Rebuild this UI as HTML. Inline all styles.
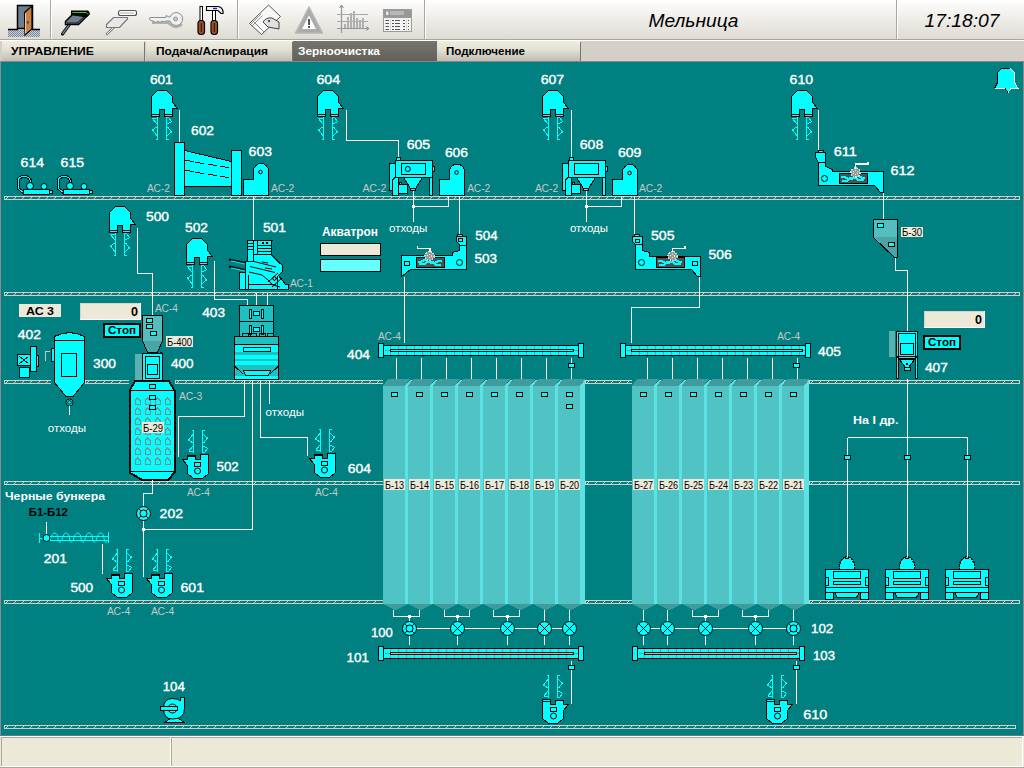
<!DOCTYPE html>
<html><head><meta charset="utf-8"><title>Мельница</title>
<style>
html,body{margin:0;padding:0;width:1024px;height:768px;overflow:hidden;background:#D4D0C8;}
svg{display:block;position:absolute;left:0;top:0;}
text{font-family:"Liberation Sans",sans-serif;}
</style></head><body>
<svg width="1024" height="768" viewBox="0 0 1024 768" shape-rendering="crispEdges">

<defs>
<linearGradient id="tb" x1="0" y1="0" x2="0" y2="1">
 <stop offset="0" stop-color="#FFFFFF"/><stop offset="0.2" stop-color="#F8F7F4"/><stop offset="1" stop-color="#DEDBD3"/>
</linearGradient>
<linearGradient id="tab" x1="0" y1="0" x2="0" y2="1">
 <stop offset="0" stop-color="#F0EEE0"/><stop offset="0.45" stop-color="#E2DFD4"/><stop offset="1" stop-color="#BFBCB4"/>
</linearGradient>
<linearGradient id="tabact" x1="0" y1="0" x2="0" y2="1">
 <stop offset="0" stop-color="#76746E"/><stop offset="1" stop-color="#62605B"/>
</linearGradient>
<pattern id="dith" width="2" height="2" patternUnits="userSpaceOnUse">
 <rect width="2" height="2" fill="#C8CCD4"/><rect width="1" height="1" fill="#7C8AA0"/><rect x="1" y="1" width="1" height="1" fill="#7C8AA0"/>
</pattern>
</defs>
<rect x="0" y="0" width="1024" height="39" fill="url(#tb)"/>
<rect x="0" y="39" width="1024" height="1" fill="#ACA899"/>
<rect x="0" y="40" width="1024" height="1" fill="#FFFFFF"/>
<rect x="50" y="0" width="1" height="39" fill="#ACA899"/><rect x="51" y="0" width="1" height="39" fill="#FFFFFF"/>
<rect x="237" y="0" width="1" height="39" fill="#ACA899"/><rect x="238" y="0" width="1" height="39" fill="#FFFFFF"/>
<rect x="424" y="0" width="1" height="39" fill="#ACA899"/><rect x="425" y="0" width="1" height="39" fill="#FFFFFF"/>
<rect x="896" y="0" width="1" height="39" fill="#ACA899"/><rect x="897" y="0" width="1" height="39" fill="#FFFFFF"/>
<rect x="0" y="41" width="1024" height="21" fill="#D4D0C8"/>
<rect x="2" y="41" width="143" height="20" fill="url(#tab)"/>
<rect x="144" y="42" width="1" height="19" fill="#77756F"/>
<text x="11" y="55" font-size="11" font-weight="bold" fill="#000000" textLength="83" lengthAdjust="spacingAndGlyphs">УПРАВЛЕНИЕ</text>
<rect x="146" y="41" width="147" height="20" fill="url(#tab)"/>
<rect x="292" y="42" width="1" height="19" fill="#77756F"/>
<text x="156" y="55" font-size="11" font-weight="bold" fill="#000000" textLength="112" lengthAdjust="spacingAndGlyphs">Подача/Аспирация</text>
<rect x="293" y="41" width="144" height="20" fill="url(#tabact)"/>
<text x="298" y="55" font-size="11" font-weight="bold" fill="#FFFFFF" textLength="82" lengthAdjust="spacingAndGlyphs">Зерноочистка</text>
<rect x="437" y="41" width="144" height="20" fill="url(#tab)"/>
<rect x="580" y="42" width="1" height="19" fill="#77756F"/>
<text x="446" y="55" font-size="11" font-weight="bold" fill="#000000" textLength="79" lengthAdjust="spacingAndGlyphs">Подключение</text>
<rect x="0" y="61" width="1024" height="1" fill="#8A8780"/>
<text x="648.5" y="27" font-size="19" font-style="italic" fill="#000" textLength="90" lengthAdjust="spacingAndGlyphs">Мельница</text>
<text x="924.5" y="27" font-size="19" font-style="italic" fill="#000" textLength="75" lengthAdjust="spacingAndGlyphs">17:18:07</text>
<rect x="0" y="62" width="1024" height="674" fill="#008080"/>
<rect x="0" y="62" width="1" height="674" fill="#8C8C8C"/>
<rect x="1023" y="62" width="1" height="674" fill="#8C8C8C"/>
<rect x="0" y="736" width="1024" height="32" fill="#ECE9D8"/>
<rect x="0" y="736" width="1024" height="1" fill="#FFFFFF"/>
<rect x="1" y="737" width="169" height="1" fill="#ACA899"/><rect x="1" y="737" width="1" height="29" fill="#ACA899"/>
<rect x="170" y="737" width="1" height="30" fill="#FFFFFF"/><rect x="1" y="766" width="170" height="1" fill="#FFFFFF"/>
<rect x="171" y="737" width="851" height="1" fill="#ACA899"/><rect x="171" y="737" width="1" height="29" fill="#ACA899"/>
<rect x="171" y="766" width="852" height="1" fill="#FFFFFF"/><rect x="1022" y="737" width="1" height="30" fill="#FFFFFF"/>
<rect x="0" y="735" width="1024" height="1" fill="#5E7C7C"/>
<rect x="0" y="767" width="1024" height="1" fill="#ACA899"/>
<rect x="4" y="196" width="1016" height="1" fill="#D4D0C8"/>
<rect x="4" y="199" width="1016" height="1" fill="#D4D0C8"/>
<rect x="4" y="196" width="1" height="4" fill="#D4D0C8"/>
<rect x="1019" y="196" width="1" height="4" fill="#D4D0C8"/>
<path d="M6 198h1v1h-1zM7 197h1v1h-1zM14 198h1v1h-1zM15 197h1v1h-1zM22 198h1v1h-1zM23 197h1v1h-1zM30 198h1v1h-1zM31 197h1v1h-1zM38 198h1v1h-1zM39 197h1v1h-1zM46 198h1v1h-1zM47 197h1v1h-1zM54 198h1v1h-1zM55 197h1v1h-1zM62 198h1v1h-1zM63 197h1v1h-1zM70 198h1v1h-1zM71 197h1v1h-1zM78 198h1v1h-1zM79 197h1v1h-1zM86 198h1v1h-1zM87 197h1v1h-1zM94 198h1v1h-1zM95 197h1v1h-1zM102 198h1v1h-1zM103 197h1v1h-1zM110 198h1v1h-1zM111 197h1v1h-1zM118 198h1v1h-1zM119 197h1v1h-1zM126 198h1v1h-1zM127 197h1v1h-1zM134 198h1v1h-1zM135 197h1v1h-1zM142 198h1v1h-1zM143 197h1v1h-1zM150 198h1v1h-1zM151 197h1v1h-1zM158 198h1v1h-1zM159 197h1v1h-1zM166 198h1v1h-1zM167 197h1v1h-1zM174 198h1v1h-1zM175 197h1v1h-1zM182 198h1v1h-1zM183 197h1v1h-1zM190 198h1v1h-1zM191 197h1v1h-1zM198 198h1v1h-1zM199 197h1v1h-1zM206 198h1v1h-1zM207 197h1v1h-1zM214 198h1v1h-1zM215 197h1v1h-1zM222 198h1v1h-1zM223 197h1v1h-1zM230 198h1v1h-1zM231 197h1v1h-1zM238 198h1v1h-1zM239 197h1v1h-1zM246 198h1v1h-1zM247 197h1v1h-1zM254 198h1v1h-1zM255 197h1v1h-1zM262 198h1v1h-1zM263 197h1v1h-1zM270 198h1v1h-1zM271 197h1v1h-1zM278 198h1v1h-1zM279 197h1v1h-1zM286 198h1v1h-1zM287 197h1v1h-1zM294 198h1v1h-1zM295 197h1v1h-1zM302 198h1v1h-1zM303 197h1v1h-1zM310 198h1v1h-1zM311 197h1v1h-1zM318 198h1v1h-1zM319 197h1v1h-1zM326 198h1v1h-1zM327 197h1v1h-1zM334 198h1v1h-1zM335 197h1v1h-1zM342 198h1v1h-1zM343 197h1v1h-1zM350 198h1v1h-1zM351 197h1v1h-1zM358 198h1v1h-1zM359 197h1v1h-1zM366 198h1v1h-1zM367 197h1v1h-1zM374 198h1v1h-1zM375 197h1v1h-1zM382 198h1v1h-1zM383 197h1v1h-1zM390 198h1v1h-1zM391 197h1v1h-1zM398 198h1v1h-1zM399 197h1v1h-1zM406 198h1v1h-1zM407 197h1v1h-1zM414 198h1v1h-1zM415 197h1v1h-1zM422 198h1v1h-1zM423 197h1v1h-1zM430 198h1v1h-1zM431 197h1v1h-1zM438 198h1v1h-1zM439 197h1v1h-1zM446 198h1v1h-1zM447 197h1v1h-1zM454 198h1v1h-1zM455 197h1v1h-1zM462 198h1v1h-1zM463 197h1v1h-1zM470 198h1v1h-1zM471 197h1v1h-1zM478 198h1v1h-1zM479 197h1v1h-1zM486 198h1v1h-1zM487 197h1v1h-1zM494 198h1v1h-1zM495 197h1v1h-1zM502 198h1v1h-1zM503 197h1v1h-1zM510 198h1v1h-1zM511 197h1v1h-1zM518 198h1v1h-1zM519 197h1v1h-1zM526 198h1v1h-1zM527 197h1v1h-1zM534 198h1v1h-1zM535 197h1v1h-1zM542 198h1v1h-1zM543 197h1v1h-1zM550 198h1v1h-1zM551 197h1v1h-1zM558 198h1v1h-1zM559 197h1v1h-1zM566 198h1v1h-1zM567 197h1v1h-1zM574 198h1v1h-1zM575 197h1v1h-1zM582 198h1v1h-1zM583 197h1v1h-1zM590 198h1v1h-1zM591 197h1v1h-1zM598 198h1v1h-1zM599 197h1v1h-1zM606 198h1v1h-1zM607 197h1v1h-1zM614 198h1v1h-1zM615 197h1v1h-1zM622 198h1v1h-1zM623 197h1v1h-1zM630 198h1v1h-1zM631 197h1v1h-1zM638 198h1v1h-1zM639 197h1v1h-1zM646 198h1v1h-1zM647 197h1v1h-1zM654 198h1v1h-1zM655 197h1v1h-1zM662 198h1v1h-1zM663 197h1v1h-1zM670 198h1v1h-1zM671 197h1v1h-1zM678 198h1v1h-1zM679 197h1v1h-1zM686 198h1v1h-1zM687 197h1v1h-1zM694 198h1v1h-1zM695 197h1v1h-1zM702 198h1v1h-1zM703 197h1v1h-1zM710 198h1v1h-1zM711 197h1v1h-1zM718 198h1v1h-1zM719 197h1v1h-1zM726 198h1v1h-1zM727 197h1v1h-1zM734 198h1v1h-1zM735 197h1v1h-1zM742 198h1v1h-1zM743 197h1v1h-1zM750 198h1v1h-1zM751 197h1v1h-1zM758 198h1v1h-1zM759 197h1v1h-1zM766 198h1v1h-1zM767 197h1v1h-1zM774 198h1v1h-1zM775 197h1v1h-1zM782 198h1v1h-1zM783 197h1v1h-1zM790 198h1v1h-1zM791 197h1v1h-1zM798 198h1v1h-1zM799 197h1v1h-1zM806 198h1v1h-1zM807 197h1v1h-1zM814 198h1v1h-1zM815 197h1v1h-1zM822 198h1v1h-1zM823 197h1v1h-1zM830 198h1v1h-1zM831 197h1v1h-1zM838 198h1v1h-1zM839 197h1v1h-1zM846 198h1v1h-1zM847 197h1v1h-1zM854 198h1v1h-1zM855 197h1v1h-1zM862 198h1v1h-1zM863 197h1v1h-1zM870 198h1v1h-1zM871 197h1v1h-1zM878 198h1v1h-1zM879 197h1v1h-1zM886 198h1v1h-1zM887 197h1v1h-1zM894 198h1v1h-1zM895 197h1v1h-1zM902 198h1v1h-1zM903 197h1v1h-1zM910 198h1v1h-1zM911 197h1v1h-1zM918 198h1v1h-1zM919 197h1v1h-1zM926 198h1v1h-1zM927 197h1v1h-1zM934 198h1v1h-1zM935 197h1v1h-1zM942 198h1v1h-1zM943 197h1v1h-1zM950 198h1v1h-1zM951 197h1v1h-1zM958 198h1v1h-1zM959 197h1v1h-1zM966 198h1v1h-1zM967 197h1v1h-1zM974 198h1v1h-1zM975 197h1v1h-1zM982 198h1v1h-1zM983 197h1v1h-1zM990 198h1v1h-1zM991 197h1v1h-1zM998 198h1v1h-1zM999 197h1v1h-1zM1006 198h1v1h-1zM1007 197h1v1h-1zM1014 198h1v1h-1zM1015 197h1v1h-1z" fill="#D4D0C8"/>
<rect x="4" y="292" width="1016" height="1" fill="#D4D0C8"/>
<rect x="4" y="295" width="1016" height="1" fill="#D4D0C8"/>
<rect x="4" y="292" width="1" height="4" fill="#D4D0C8"/>
<rect x="1019" y="292" width="1" height="4" fill="#D4D0C8"/>
<path d="M6 294h1v1h-1zM7 293h1v1h-1zM14 294h1v1h-1zM15 293h1v1h-1zM22 294h1v1h-1zM23 293h1v1h-1zM30 294h1v1h-1zM31 293h1v1h-1zM38 294h1v1h-1zM39 293h1v1h-1zM46 294h1v1h-1zM47 293h1v1h-1zM54 294h1v1h-1zM55 293h1v1h-1zM62 294h1v1h-1zM63 293h1v1h-1zM70 294h1v1h-1zM71 293h1v1h-1zM78 294h1v1h-1zM79 293h1v1h-1zM86 294h1v1h-1zM87 293h1v1h-1zM94 294h1v1h-1zM95 293h1v1h-1zM102 294h1v1h-1zM103 293h1v1h-1zM110 294h1v1h-1zM111 293h1v1h-1zM118 294h1v1h-1zM119 293h1v1h-1zM126 294h1v1h-1zM127 293h1v1h-1zM134 294h1v1h-1zM135 293h1v1h-1zM142 294h1v1h-1zM143 293h1v1h-1zM150 294h1v1h-1zM151 293h1v1h-1zM158 294h1v1h-1zM159 293h1v1h-1zM166 294h1v1h-1zM167 293h1v1h-1zM174 294h1v1h-1zM175 293h1v1h-1zM182 294h1v1h-1zM183 293h1v1h-1zM190 294h1v1h-1zM191 293h1v1h-1zM198 294h1v1h-1zM199 293h1v1h-1zM206 294h1v1h-1zM207 293h1v1h-1zM214 294h1v1h-1zM215 293h1v1h-1zM222 294h1v1h-1zM223 293h1v1h-1zM230 294h1v1h-1zM231 293h1v1h-1zM238 294h1v1h-1zM239 293h1v1h-1zM246 294h1v1h-1zM247 293h1v1h-1zM254 294h1v1h-1zM255 293h1v1h-1zM262 294h1v1h-1zM263 293h1v1h-1zM270 294h1v1h-1zM271 293h1v1h-1zM278 294h1v1h-1zM279 293h1v1h-1zM286 294h1v1h-1zM287 293h1v1h-1zM294 294h1v1h-1zM295 293h1v1h-1zM302 294h1v1h-1zM303 293h1v1h-1zM310 294h1v1h-1zM311 293h1v1h-1zM318 294h1v1h-1zM319 293h1v1h-1zM326 294h1v1h-1zM327 293h1v1h-1zM334 294h1v1h-1zM335 293h1v1h-1zM342 294h1v1h-1zM343 293h1v1h-1zM350 294h1v1h-1zM351 293h1v1h-1zM358 294h1v1h-1zM359 293h1v1h-1zM366 294h1v1h-1zM367 293h1v1h-1zM374 294h1v1h-1zM375 293h1v1h-1zM382 294h1v1h-1zM383 293h1v1h-1zM390 294h1v1h-1zM391 293h1v1h-1zM398 294h1v1h-1zM399 293h1v1h-1zM406 294h1v1h-1zM407 293h1v1h-1zM414 294h1v1h-1zM415 293h1v1h-1zM422 294h1v1h-1zM423 293h1v1h-1zM430 294h1v1h-1zM431 293h1v1h-1zM438 294h1v1h-1zM439 293h1v1h-1zM446 294h1v1h-1zM447 293h1v1h-1zM454 294h1v1h-1zM455 293h1v1h-1zM462 294h1v1h-1zM463 293h1v1h-1zM470 294h1v1h-1zM471 293h1v1h-1zM478 294h1v1h-1zM479 293h1v1h-1zM486 294h1v1h-1zM487 293h1v1h-1zM494 294h1v1h-1zM495 293h1v1h-1zM502 294h1v1h-1zM503 293h1v1h-1zM510 294h1v1h-1zM511 293h1v1h-1zM518 294h1v1h-1zM519 293h1v1h-1zM526 294h1v1h-1zM527 293h1v1h-1zM534 294h1v1h-1zM535 293h1v1h-1zM542 294h1v1h-1zM543 293h1v1h-1zM550 294h1v1h-1zM551 293h1v1h-1zM558 294h1v1h-1zM559 293h1v1h-1zM566 294h1v1h-1zM567 293h1v1h-1zM574 294h1v1h-1zM575 293h1v1h-1zM582 294h1v1h-1zM583 293h1v1h-1zM590 294h1v1h-1zM591 293h1v1h-1zM598 294h1v1h-1zM599 293h1v1h-1zM606 294h1v1h-1zM607 293h1v1h-1zM614 294h1v1h-1zM615 293h1v1h-1zM622 294h1v1h-1zM623 293h1v1h-1zM630 294h1v1h-1zM631 293h1v1h-1zM638 294h1v1h-1zM639 293h1v1h-1zM646 294h1v1h-1zM647 293h1v1h-1zM654 294h1v1h-1zM655 293h1v1h-1zM662 294h1v1h-1zM663 293h1v1h-1zM670 294h1v1h-1zM671 293h1v1h-1zM678 294h1v1h-1zM679 293h1v1h-1zM686 294h1v1h-1zM687 293h1v1h-1zM694 294h1v1h-1zM695 293h1v1h-1zM702 294h1v1h-1zM703 293h1v1h-1zM710 294h1v1h-1zM711 293h1v1h-1zM718 294h1v1h-1zM719 293h1v1h-1zM726 294h1v1h-1zM727 293h1v1h-1zM734 294h1v1h-1zM735 293h1v1h-1zM742 294h1v1h-1zM743 293h1v1h-1zM750 294h1v1h-1zM751 293h1v1h-1zM758 294h1v1h-1zM759 293h1v1h-1zM766 294h1v1h-1zM767 293h1v1h-1zM774 294h1v1h-1zM775 293h1v1h-1zM782 294h1v1h-1zM783 293h1v1h-1zM790 294h1v1h-1zM791 293h1v1h-1zM798 294h1v1h-1zM799 293h1v1h-1zM806 294h1v1h-1zM807 293h1v1h-1zM814 294h1v1h-1zM815 293h1v1h-1zM822 294h1v1h-1zM823 293h1v1h-1zM830 294h1v1h-1zM831 293h1v1h-1zM838 294h1v1h-1zM839 293h1v1h-1zM846 294h1v1h-1zM847 293h1v1h-1zM854 294h1v1h-1zM855 293h1v1h-1zM862 294h1v1h-1zM863 293h1v1h-1zM870 294h1v1h-1zM871 293h1v1h-1zM878 294h1v1h-1zM879 293h1v1h-1zM886 294h1v1h-1zM887 293h1v1h-1zM894 294h1v1h-1zM895 293h1v1h-1zM902 294h1v1h-1zM903 293h1v1h-1zM910 294h1v1h-1zM911 293h1v1h-1zM918 294h1v1h-1zM919 293h1v1h-1zM926 294h1v1h-1zM927 293h1v1h-1zM934 294h1v1h-1zM935 293h1v1h-1zM942 294h1v1h-1zM943 293h1v1h-1zM950 294h1v1h-1zM951 293h1v1h-1zM958 294h1v1h-1zM959 293h1v1h-1zM966 294h1v1h-1zM967 293h1v1h-1zM974 294h1v1h-1zM975 293h1v1h-1zM982 294h1v1h-1zM983 293h1v1h-1zM990 294h1v1h-1zM991 293h1v1h-1zM998 294h1v1h-1zM999 293h1v1h-1zM1006 294h1v1h-1zM1007 293h1v1h-1zM1014 294h1v1h-1zM1015 293h1v1h-1z" fill="#D4D0C8"/>
<rect x="4" y="725" width="1012" height="1" fill="#D4D0C8"/>
<rect x="4" y="728" width="1012" height="1" fill="#D4D0C8"/>
<rect x="4" y="725" width="1" height="4" fill="#D4D0C8"/>
<rect x="1015" y="725" width="1" height="4" fill="#D4D0C8"/>
<path d="M6 727h1v1h-1zM7 726h1v1h-1zM14 727h1v1h-1zM15 726h1v1h-1zM22 727h1v1h-1zM23 726h1v1h-1zM30 727h1v1h-1zM31 726h1v1h-1zM38 727h1v1h-1zM39 726h1v1h-1zM46 727h1v1h-1zM47 726h1v1h-1zM54 727h1v1h-1zM55 726h1v1h-1zM62 727h1v1h-1zM63 726h1v1h-1zM70 727h1v1h-1zM71 726h1v1h-1zM78 727h1v1h-1zM79 726h1v1h-1zM86 727h1v1h-1zM87 726h1v1h-1zM94 727h1v1h-1zM95 726h1v1h-1zM102 727h1v1h-1zM103 726h1v1h-1zM110 727h1v1h-1zM111 726h1v1h-1zM118 727h1v1h-1zM119 726h1v1h-1zM126 727h1v1h-1zM127 726h1v1h-1zM134 727h1v1h-1zM135 726h1v1h-1zM142 727h1v1h-1zM143 726h1v1h-1zM150 727h1v1h-1zM151 726h1v1h-1zM158 727h1v1h-1zM159 726h1v1h-1zM166 727h1v1h-1zM167 726h1v1h-1zM174 727h1v1h-1zM175 726h1v1h-1zM182 727h1v1h-1zM183 726h1v1h-1zM190 727h1v1h-1zM191 726h1v1h-1zM198 727h1v1h-1zM199 726h1v1h-1zM206 727h1v1h-1zM207 726h1v1h-1zM214 727h1v1h-1zM215 726h1v1h-1zM222 727h1v1h-1zM223 726h1v1h-1zM230 727h1v1h-1zM231 726h1v1h-1zM238 727h1v1h-1zM239 726h1v1h-1zM246 727h1v1h-1zM247 726h1v1h-1zM254 727h1v1h-1zM255 726h1v1h-1zM262 727h1v1h-1zM263 726h1v1h-1zM270 727h1v1h-1zM271 726h1v1h-1zM278 727h1v1h-1zM279 726h1v1h-1zM286 727h1v1h-1zM287 726h1v1h-1zM294 727h1v1h-1zM295 726h1v1h-1zM302 727h1v1h-1zM303 726h1v1h-1zM310 727h1v1h-1zM311 726h1v1h-1zM318 727h1v1h-1zM319 726h1v1h-1zM326 727h1v1h-1zM327 726h1v1h-1zM334 727h1v1h-1zM335 726h1v1h-1zM342 727h1v1h-1zM343 726h1v1h-1zM350 727h1v1h-1zM351 726h1v1h-1zM358 727h1v1h-1zM359 726h1v1h-1zM366 727h1v1h-1zM367 726h1v1h-1zM374 727h1v1h-1zM375 726h1v1h-1zM382 727h1v1h-1zM383 726h1v1h-1zM390 727h1v1h-1zM391 726h1v1h-1zM398 727h1v1h-1zM399 726h1v1h-1zM406 727h1v1h-1zM407 726h1v1h-1zM414 727h1v1h-1zM415 726h1v1h-1zM422 727h1v1h-1zM423 726h1v1h-1zM430 727h1v1h-1zM431 726h1v1h-1zM438 727h1v1h-1zM439 726h1v1h-1zM446 727h1v1h-1zM447 726h1v1h-1zM454 727h1v1h-1zM455 726h1v1h-1zM462 727h1v1h-1zM463 726h1v1h-1zM470 727h1v1h-1zM471 726h1v1h-1zM478 727h1v1h-1zM479 726h1v1h-1zM486 727h1v1h-1zM487 726h1v1h-1zM494 727h1v1h-1zM495 726h1v1h-1zM502 727h1v1h-1zM503 726h1v1h-1zM510 727h1v1h-1zM511 726h1v1h-1zM518 727h1v1h-1zM519 726h1v1h-1zM526 727h1v1h-1zM527 726h1v1h-1zM534 727h1v1h-1zM535 726h1v1h-1zM542 727h1v1h-1zM543 726h1v1h-1zM550 727h1v1h-1zM551 726h1v1h-1zM558 727h1v1h-1zM559 726h1v1h-1zM566 727h1v1h-1zM567 726h1v1h-1zM574 727h1v1h-1zM575 726h1v1h-1zM582 727h1v1h-1zM583 726h1v1h-1zM590 727h1v1h-1zM591 726h1v1h-1zM598 727h1v1h-1zM599 726h1v1h-1zM606 727h1v1h-1zM607 726h1v1h-1zM614 727h1v1h-1zM615 726h1v1h-1zM622 727h1v1h-1zM623 726h1v1h-1zM630 727h1v1h-1zM631 726h1v1h-1zM638 727h1v1h-1zM639 726h1v1h-1zM646 727h1v1h-1zM647 726h1v1h-1zM654 727h1v1h-1zM655 726h1v1h-1zM662 727h1v1h-1zM663 726h1v1h-1zM670 727h1v1h-1zM671 726h1v1h-1zM678 727h1v1h-1zM679 726h1v1h-1zM686 727h1v1h-1zM687 726h1v1h-1zM694 727h1v1h-1zM695 726h1v1h-1zM702 727h1v1h-1zM703 726h1v1h-1zM710 727h1v1h-1zM711 726h1v1h-1zM718 727h1v1h-1zM719 726h1v1h-1zM726 727h1v1h-1zM727 726h1v1h-1zM734 727h1v1h-1zM735 726h1v1h-1zM742 727h1v1h-1zM743 726h1v1h-1zM750 727h1v1h-1zM751 726h1v1h-1zM758 727h1v1h-1zM759 726h1v1h-1zM766 727h1v1h-1zM767 726h1v1h-1zM774 727h1v1h-1zM775 726h1v1h-1zM782 727h1v1h-1zM783 726h1v1h-1zM790 727h1v1h-1zM791 726h1v1h-1zM798 727h1v1h-1zM799 726h1v1h-1zM806 727h1v1h-1zM807 726h1v1h-1zM814 727h1v1h-1zM815 726h1v1h-1zM822 727h1v1h-1zM823 726h1v1h-1zM830 727h1v1h-1zM831 726h1v1h-1zM838 727h1v1h-1zM839 726h1v1h-1zM846 727h1v1h-1zM847 726h1v1h-1zM854 727h1v1h-1zM855 726h1v1h-1zM862 727h1v1h-1zM863 726h1v1h-1zM870 727h1v1h-1zM871 726h1v1h-1zM878 727h1v1h-1zM879 726h1v1h-1zM886 727h1v1h-1zM887 726h1v1h-1zM894 727h1v1h-1zM895 726h1v1h-1zM902 727h1v1h-1zM903 726h1v1h-1zM910 727h1v1h-1zM911 726h1v1h-1zM918 727h1v1h-1zM919 726h1v1h-1zM926 727h1v1h-1zM927 726h1v1h-1zM934 727h1v1h-1zM935 726h1v1h-1zM942 727h1v1h-1zM943 726h1v1h-1zM950 727h1v1h-1zM951 726h1v1h-1zM958 727h1v1h-1zM959 726h1v1h-1zM966 727h1v1h-1zM967 726h1v1h-1zM974 727h1v1h-1zM975 726h1v1h-1zM982 727h1v1h-1zM983 726h1v1h-1zM990 727h1v1h-1zM991 726h1v1h-1zM998 727h1v1h-1zM999 726h1v1h-1zM1006 727h1v1h-1zM1007 726h1v1h-1z" fill="#D4D0C8"/>
<rect x="4" y="380" width="47" height="1" fill="#D4D0C8"/>
<rect x="4" y="383" width="47" height="1" fill="#D4D0C8"/>
<rect x="4" y="380" width="1" height="4" fill="#D4D0C8"/>
<path d="M6 382h1v1h-1zM7 381h1v1h-1zM14 382h1v1h-1zM15 381h1v1h-1zM22 382h1v1h-1zM23 381h1v1h-1zM30 382h1v1h-1zM31 381h1v1h-1zM38 382h1v1h-1zM39 381h1v1h-1zM46 382h1v1h-1zM47 381h1v1h-1z" fill="#D4D0C8"/>
<rect x="85" y="380" width="44" height="1" fill="#D4D0C8"/>
<rect x="85" y="383" width="44" height="1" fill="#D4D0C8"/>
<rect x="85" y="380" width="1" height="4" fill="#D4D0C8"/>
<path d="M87 382h1v1h-1zM88 381h1v1h-1zM95 382h1v1h-1zM96 381h1v1h-1zM103 382h1v1h-1zM104 381h1v1h-1zM111 382h1v1h-1zM112 381h1v1h-1zM119 382h1v1h-1zM120 381h1v1h-1z" fill="#D4D0C8"/>
<rect x="175" y="380" width="208" height="1" fill="#D4D0C8"/>
<rect x="175" y="383" width="208" height="1" fill="#D4D0C8"/>
<rect x="175" y="380" width="1" height="4" fill="#D4D0C8"/>
<path d="M177 382h1v1h-1zM178 381h1v1h-1zM185 382h1v1h-1zM186 381h1v1h-1zM193 382h1v1h-1zM194 381h1v1h-1zM201 382h1v1h-1zM202 381h1v1h-1zM209 382h1v1h-1zM210 381h1v1h-1zM217 382h1v1h-1zM218 381h1v1h-1zM225 382h1v1h-1zM226 381h1v1h-1zM233 382h1v1h-1zM234 381h1v1h-1zM241 382h1v1h-1zM242 381h1v1h-1zM249 382h1v1h-1zM250 381h1v1h-1zM257 382h1v1h-1zM258 381h1v1h-1zM265 382h1v1h-1zM266 381h1v1h-1zM273 382h1v1h-1zM274 381h1v1h-1zM281 382h1v1h-1zM282 381h1v1h-1zM289 382h1v1h-1zM290 381h1v1h-1zM297 382h1v1h-1zM298 381h1v1h-1zM305 382h1v1h-1zM306 381h1v1h-1zM313 382h1v1h-1zM314 381h1v1h-1zM321 382h1v1h-1zM322 381h1v1h-1zM329 382h1v1h-1zM330 381h1v1h-1zM337 382h1v1h-1zM338 381h1v1h-1zM345 382h1v1h-1zM346 381h1v1h-1zM353 382h1v1h-1zM354 381h1v1h-1zM361 382h1v1h-1zM362 381h1v1h-1zM369 382h1v1h-1zM370 381h1v1h-1zM377 382h1v1h-1zM378 381h1v1h-1z" fill="#D4D0C8"/>
<rect x="585" y="380" width="47" height="1" fill="#D4D0C8"/>
<rect x="585" y="383" width="47" height="1" fill="#D4D0C8"/>
<rect x="585" y="380" width="1" height="4" fill="#D4D0C8"/>
<path d="M587 382h1v1h-1zM588 381h1v1h-1zM595 382h1v1h-1zM596 381h1v1h-1zM603 382h1v1h-1zM604 381h1v1h-1zM611 382h1v1h-1zM612 381h1v1h-1zM619 382h1v1h-1zM620 381h1v1h-1zM627 382h1v1h-1zM628 381h1v1h-1z" fill="#D4D0C8"/>
<rect x="809" y="380" width="211" height="1" fill="#D4D0C8"/>
<rect x="809" y="383" width="211" height="1" fill="#D4D0C8"/>
<rect x="809" y="380" width="1" height="4" fill="#D4D0C8"/>
<rect x="1019" y="380" width="1" height="4" fill="#D4D0C8"/>
<path d="M811 382h1v1h-1zM812 381h1v1h-1zM819 382h1v1h-1zM820 381h1v1h-1zM827 382h1v1h-1zM828 381h1v1h-1zM835 382h1v1h-1zM836 381h1v1h-1zM843 382h1v1h-1zM844 381h1v1h-1zM851 382h1v1h-1zM852 381h1v1h-1zM859 382h1v1h-1zM860 381h1v1h-1zM867 382h1v1h-1zM868 381h1v1h-1zM875 382h1v1h-1zM876 381h1v1h-1zM883 382h1v1h-1zM884 381h1v1h-1zM891 382h1v1h-1zM892 381h1v1h-1zM899 382h1v1h-1zM900 381h1v1h-1zM907 382h1v1h-1zM908 381h1v1h-1zM915 382h1v1h-1zM916 381h1v1h-1zM923 382h1v1h-1zM924 381h1v1h-1zM931 382h1v1h-1zM932 381h1v1h-1zM939 382h1v1h-1zM940 381h1v1h-1zM947 382h1v1h-1zM948 381h1v1h-1zM955 382h1v1h-1zM956 381h1v1h-1zM963 382h1v1h-1zM964 381h1v1h-1zM971 382h1v1h-1zM972 381h1v1h-1zM979 382h1v1h-1zM980 381h1v1h-1zM987 382h1v1h-1zM988 381h1v1h-1zM995 382h1v1h-1zM996 381h1v1h-1zM1003 382h1v1h-1zM1004 381h1v1h-1zM1011 382h1v1h-1zM1012 381h1v1h-1z" fill="#D4D0C8"/>
<rect x="4" y="481" width="379" height="1" fill="#D4D0C8"/>
<rect x="4" y="484" width="379" height="1" fill="#D4D0C8"/>
<rect x="4" y="481" width="1" height="4" fill="#D4D0C8"/>
<path d="M6 483h1v1h-1zM7 482h1v1h-1zM14 483h1v1h-1zM15 482h1v1h-1zM22 483h1v1h-1zM23 482h1v1h-1zM30 483h1v1h-1zM31 482h1v1h-1zM38 483h1v1h-1zM39 482h1v1h-1zM46 483h1v1h-1zM47 482h1v1h-1zM54 483h1v1h-1zM55 482h1v1h-1zM62 483h1v1h-1zM63 482h1v1h-1zM70 483h1v1h-1zM71 482h1v1h-1zM78 483h1v1h-1zM79 482h1v1h-1zM86 483h1v1h-1zM87 482h1v1h-1zM94 483h1v1h-1zM95 482h1v1h-1zM102 483h1v1h-1zM103 482h1v1h-1zM110 483h1v1h-1zM111 482h1v1h-1zM118 483h1v1h-1zM119 482h1v1h-1zM126 483h1v1h-1zM127 482h1v1h-1zM134 483h1v1h-1zM135 482h1v1h-1zM142 483h1v1h-1zM143 482h1v1h-1zM150 483h1v1h-1zM151 482h1v1h-1zM158 483h1v1h-1zM159 482h1v1h-1zM166 483h1v1h-1zM167 482h1v1h-1zM174 483h1v1h-1zM175 482h1v1h-1zM182 483h1v1h-1zM183 482h1v1h-1zM190 483h1v1h-1zM191 482h1v1h-1zM198 483h1v1h-1zM199 482h1v1h-1zM206 483h1v1h-1zM207 482h1v1h-1zM214 483h1v1h-1zM215 482h1v1h-1zM222 483h1v1h-1zM223 482h1v1h-1zM230 483h1v1h-1zM231 482h1v1h-1zM238 483h1v1h-1zM239 482h1v1h-1zM246 483h1v1h-1zM247 482h1v1h-1zM254 483h1v1h-1zM255 482h1v1h-1zM262 483h1v1h-1zM263 482h1v1h-1zM270 483h1v1h-1zM271 482h1v1h-1zM278 483h1v1h-1zM279 482h1v1h-1zM286 483h1v1h-1zM287 482h1v1h-1zM294 483h1v1h-1zM295 482h1v1h-1zM302 483h1v1h-1zM303 482h1v1h-1zM310 483h1v1h-1zM311 482h1v1h-1zM318 483h1v1h-1zM319 482h1v1h-1zM326 483h1v1h-1zM327 482h1v1h-1zM334 483h1v1h-1zM335 482h1v1h-1zM342 483h1v1h-1zM343 482h1v1h-1zM350 483h1v1h-1zM351 482h1v1h-1zM358 483h1v1h-1zM359 482h1v1h-1zM366 483h1v1h-1zM367 482h1v1h-1zM374 483h1v1h-1zM375 482h1v1h-1z" fill="#D4D0C8"/>
<rect x="585" y="481" width="47" height="1" fill="#D4D0C8"/>
<rect x="585" y="484" width="47" height="1" fill="#D4D0C8"/>
<rect x="585" y="481" width="1" height="4" fill="#D4D0C8"/>
<path d="M587 483h1v1h-1zM588 482h1v1h-1zM595 483h1v1h-1zM596 482h1v1h-1zM603 483h1v1h-1zM604 482h1v1h-1zM611 483h1v1h-1zM612 482h1v1h-1zM619 483h1v1h-1zM620 482h1v1h-1zM627 483h1v1h-1zM628 482h1v1h-1z" fill="#D4D0C8"/>
<rect x="809" y="481" width="211" height="1" fill="#D4D0C8"/>
<rect x="809" y="484" width="211" height="1" fill="#D4D0C8"/>
<rect x="809" y="481" width="1" height="4" fill="#D4D0C8"/>
<rect x="1019" y="481" width="1" height="4" fill="#D4D0C8"/>
<path d="M811 483h1v1h-1zM812 482h1v1h-1zM819 483h1v1h-1zM820 482h1v1h-1zM827 483h1v1h-1zM828 482h1v1h-1zM835 483h1v1h-1zM836 482h1v1h-1zM843 483h1v1h-1zM844 482h1v1h-1zM851 483h1v1h-1zM852 482h1v1h-1zM859 483h1v1h-1zM860 482h1v1h-1zM867 483h1v1h-1zM868 482h1v1h-1zM875 483h1v1h-1zM876 482h1v1h-1zM883 483h1v1h-1zM884 482h1v1h-1zM891 483h1v1h-1zM892 482h1v1h-1zM899 483h1v1h-1zM900 482h1v1h-1zM907 483h1v1h-1zM908 482h1v1h-1zM915 483h1v1h-1zM916 482h1v1h-1zM923 483h1v1h-1zM924 482h1v1h-1zM931 483h1v1h-1zM932 482h1v1h-1zM939 483h1v1h-1zM940 482h1v1h-1zM947 483h1v1h-1zM948 482h1v1h-1zM955 483h1v1h-1zM956 482h1v1h-1zM963 483h1v1h-1zM964 482h1v1h-1zM971 483h1v1h-1zM972 482h1v1h-1zM979 483h1v1h-1zM980 482h1v1h-1zM987 483h1v1h-1zM988 482h1v1h-1zM995 483h1v1h-1zM996 482h1v1h-1zM1003 483h1v1h-1zM1004 482h1v1h-1zM1011 483h1v1h-1zM1012 482h1v1h-1z" fill="#D4D0C8"/>
<rect x="4" y="600" width="379" height="1" fill="#D4D0C8"/>
<rect x="4" y="603" width="379" height="1" fill="#D4D0C8"/>
<rect x="4" y="600" width="1" height="4" fill="#D4D0C8"/>
<path d="M6 602h1v1h-1zM7 601h1v1h-1zM14 602h1v1h-1zM15 601h1v1h-1zM22 602h1v1h-1zM23 601h1v1h-1zM30 602h1v1h-1zM31 601h1v1h-1zM38 602h1v1h-1zM39 601h1v1h-1zM46 602h1v1h-1zM47 601h1v1h-1zM54 602h1v1h-1zM55 601h1v1h-1zM62 602h1v1h-1zM63 601h1v1h-1zM70 602h1v1h-1zM71 601h1v1h-1zM78 602h1v1h-1zM79 601h1v1h-1zM86 602h1v1h-1zM87 601h1v1h-1zM94 602h1v1h-1zM95 601h1v1h-1zM102 602h1v1h-1zM103 601h1v1h-1zM110 602h1v1h-1zM111 601h1v1h-1zM118 602h1v1h-1zM119 601h1v1h-1zM126 602h1v1h-1zM127 601h1v1h-1zM134 602h1v1h-1zM135 601h1v1h-1zM142 602h1v1h-1zM143 601h1v1h-1zM150 602h1v1h-1zM151 601h1v1h-1zM158 602h1v1h-1zM159 601h1v1h-1zM166 602h1v1h-1zM167 601h1v1h-1zM174 602h1v1h-1zM175 601h1v1h-1zM182 602h1v1h-1zM183 601h1v1h-1zM190 602h1v1h-1zM191 601h1v1h-1zM198 602h1v1h-1zM199 601h1v1h-1zM206 602h1v1h-1zM207 601h1v1h-1zM214 602h1v1h-1zM215 601h1v1h-1zM222 602h1v1h-1zM223 601h1v1h-1zM230 602h1v1h-1zM231 601h1v1h-1zM238 602h1v1h-1zM239 601h1v1h-1zM246 602h1v1h-1zM247 601h1v1h-1zM254 602h1v1h-1zM255 601h1v1h-1zM262 602h1v1h-1zM263 601h1v1h-1zM270 602h1v1h-1zM271 601h1v1h-1zM278 602h1v1h-1zM279 601h1v1h-1zM286 602h1v1h-1zM287 601h1v1h-1zM294 602h1v1h-1zM295 601h1v1h-1zM302 602h1v1h-1zM303 601h1v1h-1zM310 602h1v1h-1zM311 601h1v1h-1zM318 602h1v1h-1zM319 601h1v1h-1zM326 602h1v1h-1zM327 601h1v1h-1zM334 602h1v1h-1zM335 601h1v1h-1zM342 602h1v1h-1zM343 601h1v1h-1zM350 602h1v1h-1zM351 601h1v1h-1zM358 602h1v1h-1zM359 601h1v1h-1zM366 602h1v1h-1zM367 601h1v1h-1zM374 602h1v1h-1zM375 601h1v1h-1z" fill="#D4D0C8"/>
<rect x="585" y="600" width="47" height="1" fill="#D4D0C8"/>
<rect x="585" y="603" width="47" height="1" fill="#D4D0C8"/>
<rect x="585" y="600" width="1" height="4" fill="#D4D0C8"/>
<path d="M587 602h1v1h-1zM588 601h1v1h-1zM595 602h1v1h-1zM596 601h1v1h-1zM603 602h1v1h-1zM604 601h1v1h-1zM611 602h1v1h-1zM612 601h1v1h-1zM619 602h1v1h-1zM620 601h1v1h-1zM627 602h1v1h-1zM628 601h1v1h-1z" fill="#D4D0C8"/>
<rect x="809" y="600" width="211" height="1" fill="#D4D0C8"/>
<rect x="809" y="603" width="211" height="1" fill="#D4D0C8"/>
<rect x="809" y="600" width="1" height="4" fill="#D4D0C8"/>
<rect x="1019" y="600" width="1" height="4" fill="#D4D0C8"/>
<path d="M811 602h1v1h-1zM812 601h1v1h-1zM819 602h1v1h-1zM820 601h1v1h-1zM827 602h1v1h-1zM828 601h1v1h-1zM835 602h1v1h-1zM836 601h1v1h-1zM843 602h1v1h-1zM844 601h1v1h-1zM851 602h1v1h-1zM852 601h1v1h-1zM859 602h1v1h-1zM860 601h1v1h-1zM867 602h1v1h-1zM868 601h1v1h-1zM875 602h1v1h-1zM876 601h1v1h-1zM883 602h1v1h-1zM884 601h1v1h-1zM891 602h1v1h-1zM892 601h1v1h-1zM899 602h1v1h-1zM900 601h1v1h-1zM907 602h1v1h-1zM908 601h1v1h-1zM915 602h1v1h-1zM916 601h1v1h-1zM923 602h1v1h-1zM924 601h1v1h-1zM931 602h1v1h-1zM932 601h1v1h-1zM939 602h1v1h-1zM940 601h1v1h-1zM947 602h1v1h-1zM948 601h1v1h-1zM955 602h1v1h-1zM956 601h1v1h-1zM963 602h1v1h-1zM964 601h1v1h-1zM971 602h1v1h-1zM972 601h1v1h-1zM979 602h1v1h-1zM980 601h1v1h-1zM987 602h1v1h-1zM988 601h1v1h-1zM995 602h1v1h-1zM996 601h1v1h-1zM1003 602h1v1h-1zM1004 601h1v1h-1zM1011 602h1v1h-1zM1012 601h1v1h-1z" fill="#D4D0C8"/>
<polygon points="151.5,96.5 157.5,90.5 166.5,90.5 172.5,96.5 172.5,102.5 177.5,108.5 172.5,108.5 172.5,116.5 164.5,116.5 164.5,109.5 159.5,109.5 159.5,116.5 151.5,116.5" fill="#00FFFF" stroke="#000" stroke-width="1"/>
<path d="M151.5,114.5H159.5M164.5,114.5H172.5" stroke="#000" stroke-width="1"/>
<path d="M157.5,117V140M152.5,118.5H157.5M152.5,118.5L156.5,123.5L157.5,124M157.5,126.5L152.5,130L156.5,135L157.5,136M155.5,139.5H157.5M166.5,117V140M166.5,118L168.5,117.5L171.5,121.5L166.5,124.5M167.5,127L171.5,132L166.5,136M166.5,139.5H168.5" stroke="#00FFFF" stroke-width="1" fill="none"/>
<polygon points="317.5,96.5 323.5,90.5 332.5,90.5 338.5,96.5 338.5,102.5 343.5,108.5 338.5,108.5 338.5,116.5 330.5,116.5 330.5,109.5 325.5,109.5 325.5,116.5 317.5,116.5" fill="#00FFFF" stroke="#000" stroke-width="1"/>
<path d="M317.5,114.5H325.5M330.5,114.5H338.5" stroke="#000" stroke-width="1"/>
<path d="M323.5,117V140M318.5,118.5H323.5M318.5,118.5L322.5,123.5L323.5,124M323.5,126.5L318.5,130L322.5,135L323.5,136M321.5,139.5H323.5M332.5,117V140M332.5,118L334.5,117.5L337.5,121.5L332.5,124.5M333.5,127L337.5,132L332.5,136M332.5,139.5H334.5" stroke="#00FFFF" stroke-width="1" fill="none"/>
<polygon points="542.5,96.5 548.5,90.5 557.5,90.5 563.5,96.5 563.5,102.5 568.5,108.5 563.5,108.5 563.5,116.5 555.5,116.5 555.5,109.5 550.5,109.5 550.5,116.5 542.5,116.5" fill="#00FFFF" stroke="#000" stroke-width="1"/>
<path d="M542.5,114.5H550.5M555.5,114.5H563.5" stroke="#000" stroke-width="1"/>
<path d="M548.5,117V140M543.5,118.5H548.5M543.5,118.5L547.5,123.5L548.5,124M548.5,126.5L543.5,130L547.5,135L548.5,136M546.5,139.5H548.5M557.5,117V140M557.5,118L559.5,117.5L562.5,121.5L557.5,124.5M558.5,127L562.5,132L557.5,136M557.5,139.5H559.5" stroke="#00FFFF" stroke-width="1" fill="none"/>
<polygon points="791.5,96.5 797.5,90.5 806.5,90.5 812.5,96.5 812.5,102.5 817.5,108.5 812.5,108.5 812.5,116.5 804.5,116.5 804.5,109.5 799.5,109.5 799.5,116.5 791.5,116.5" fill="#00FFFF" stroke="#000" stroke-width="1"/>
<path d="M791.5,114.5H799.5M804.5,114.5H812.5" stroke="#000" stroke-width="1"/>
<path d="M797.5,117V140M792.5,118.5H797.5M792.5,118.5L796.5,123.5L797.5,124M797.5,126.5L792.5,130L796.5,135L797.5,136M795.5,139.5H797.5M806.5,117V140M806.5,118L808.5,117.5L811.5,121.5L806.5,124.5M807.5,127L811.5,132L806.5,136M806.5,139.5H808.5" stroke="#00FFFF" stroke-width="1" fill="none"/>
<polygon points="109.5,212.5 115.5,206.5 124.5,206.5 130.5,212.5 130.5,218.5 135.5,224.5 130.5,224.5 130.5,232.5 122.5,232.5 122.5,225.5 117.5,225.5 117.5,232.5 109.5,232.5" fill="#00FFFF" stroke="#000" stroke-width="1"/>
<path d="M109.5,230.5H117.5M122.5,230.5H130.5" stroke="#000" stroke-width="1"/>
<path d="M115.5,233V256M110.5,234.5H115.5M110.5,234.5L114.5,239.5L115.5,240M115.5,242.5L110.5,246L114.5,251L115.5,252M113.5,255.5H115.5M124.5,233V256M124.5,234L126.5,233.5L129.5,237.5L124.5,240.5M125.5,243L129.5,248L124.5,252M124.5,255.5H126.5" stroke="#00FFFF" stroke-width="1" fill="none"/>
<polygon points="186.5,244.5 192.5,238.5 201.5,238.5 207.5,244.5 207.5,250.5 212.5,256.5 207.5,256.5 207.5,264.5 199.5,264.5 199.5,257.5 194.5,257.5 194.5,264.5 186.5,264.5" fill="#00FFFF" stroke="#000" stroke-width="1"/>
<path d="M186.5,262.5H194.5M199.5,262.5H207.5" stroke="#000" stroke-width="1"/>
<path d="M192.5,265V288M187.5,266.5H192.5M187.5,266.5L191.5,271.5L192.5,272M192.5,274.5L187.5,278L191.5,283L192.5,284M190.5,287.5H192.5M201.5,265V288M201.5,266L203.5,265.5L206.5,269.5L201.5,272.5M202.5,275L206.5,280L201.5,284M201.5,287.5H203.5" stroke="#00FFFF" stroke-width="1" fill="none"/>
<polygon points="208.5,454.5 200.5,454.5 200.5,459.5 195.5,459.5 195.5,455.5 187.5,455.5 187.5,459.5 182.5,459.5 187.5,465.5 187.5,473.5 193.5,478.5 202.5,478.5 208.5,473.5" fill="#00FFFF" stroke="#000" stroke-width="1"/>
<path d="M187.5,456.5H195.5" stroke="#000" stroke-width="1"/>
<rect x="194.5" y="462.5" width="6" height="4" fill="#00FFFF" stroke="#000" stroke-width="1"/>
<circle cx="197.5" cy="471" r="3" fill="#00FFFF" stroke="#000" stroke-width="1" shape-rendering="auto"/>
<path d="M193.5,453V430M188.5,451.5H193.5M188.5,451.5L192.5,446.5L193.5,446M193.5,443.5L188.5,440L192.5,435L193.5,434M191.5,430.5H193.5M202.5,453V430M202.5,452L204.5,452.5L207.5,448.5L202.5,445.5M203.5,443L207.5,438L202.5,434M202.5,430.5H204.5" stroke="#00FFFF" stroke-width="1" fill="none"/>
<polygon points="335.5,453.5 327.5,453.5 327.5,458.5 322.5,458.5 322.5,454.5 314.5,454.5 314.5,458.5 309.5,458.5 314.5,464.5 314.5,472.5 320.5,477.5 329.5,477.5 335.5,472.5" fill="#00FFFF" stroke="#000" stroke-width="1"/>
<path d="M314.5,455.5H322.5" stroke="#000" stroke-width="1"/>
<rect x="321.5" y="461.5" width="6" height="4" fill="#00FFFF" stroke="#000" stroke-width="1"/>
<circle cx="324.5" cy="470" r="3" fill="#00FFFF" stroke="#000" stroke-width="1" shape-rendering="auto"/>
<path d="M320.5,452V429M315.5,450.5H320.5M315.5,450.5L319.5,445.5L320.5,445M320.5,442.5L315.5,439L319.5,434L320.5,433M318.5,429.5H320.5M329.5,452V429M329.5,451L331.5,451.5L334.5,447.5L329.5,444.5M330.5,442L334.5,437L329.5,433M329.5,429.5H331.5" stroke="#00FFFF" stroke-width="1" fill="none"/>
<polygon points="132.5,573.5 124.5,573.5 124.5,578.5 119.5,578.5 119.5,574.5 111.5,574.5 111.5,578.5 106.5,578.5 111.5,584.5 111.5,592.5 117.5,597.5 126.5,597.5 132.5,592.5" fill="#00FFFF" stroke="#000" stroke-width="1"/>
<path d="M111.5,575.5H119.5" stroke="#000" stroke-width="1"/>
<rect x="118.5" y="581.5" width="6" height="4" fill="#00FFFF" stroke="#000" stroke-width="1"/>
<circle cx="121.5" cy="590" r="3" fill="#00FFFF" stroke="#000" stroke-width="1" shape-rendering="auto"/>
<path d="M117.5,572V549M112.5,570.5H117.5M112.5,570.5L116.5,565.5L117.5,565M117.5,562.5L112.5,559L116.5,554L117.5,553M115.5,549.5H117.5M126.5,572V549M126.5,571L128.5,571.5L131.5,567.5L126.5,564.5M127.5,562L131.5,557L126.5,553M126.5,549.5H128.5" stroke="#00FFFF" stroke-width="1" fill="none"/>
<polygon points="172.5,573.5 164.5,573.5 164.5,578.5 159.5,578.5 159.5,574.5 151.5,574.5 151.5,578.5 146.5,578.5 151.5,584.5 151.5,592.5 157.5,597.5 166.5,597.5 172.5,592.5" fill="#00FFFF" stroke="#000" stroke-width="1"/>
<path d="M151.5,575.5H159.5" stroke="#000" stroke-width="1"/>
<rect x="158.5" y="581.5" width="6" height="4" fill="#00FFFF" stroke="#000" stroke-width="1"/>
<circle cx="161.5" cy="590" r="3" fill="#00FFFF" stroke="#000" stroke-width="1" shape-rendering="auto"/>
<path d="M157.5,572V549M152.5,570.5H157.5M152.5,570.5L156.5,565.5L157.5,565M157.5,562.5L152.5,559L156.5,554L157.5,553M155.5,549.5H157.5M166.5,572V549M166.5,571L168.5,571.5L171.5,567.5L166.5,564.5M167.5,562L171.5,557L166.5,553M166.5,549.5H168.5" stroke="#00FFFF" stroke-width="1" fill="none"/>
<polygon points="542.5,699.5 550.5,699.5 550.5,704.5 555.5,704.5 555.5,700.5 563.5,700.5 563.5,704.5 568.5,704.5 563.5,710.5 563.5,718.5 557.5,723.5 548.5,723.5 542.5,718.5" fill="#00FFFF" stroke="#000" stroke-width="1"/>
<path d="M542.5,701.5H550.5" stroke="#000" stroke-width="1"/>
<rect x="550.5" y="707.5" width="6" height="4" fill="#00FFFF" stroke="#000" stroke-width="1"/>
<circle cx="553.5" cy="716" r="3" fill="#00FFFF" stroke="#000" stroke-width="1" shape-rendering="auto"/>
<path d="M548.5,698V675M543.5,696.5H548.5M543.5,696.5L547.5,691.5L548.5,691M548.5,688.5L543.5,685L547.5,680L548.5,679M546.5,675.5H548.5M557.5,698V675M557.5,697L559.5,697.5L562.5,693.5L557.5,690.5M558.5,688L562.5,683L557.5,679M557.5,675.5H559.5" stroke="#00FFFF" stroke-width="1" fill="none"/>
<polygon points="766.5,699.5 774.5,699.5 774.5,704.5 779.5,704.5 779.5,700.5 787.5,700.5 787.5,704.5 792.5,704.5 787.5,710.5 787.5,718.5 781.5,723.5 772.5,723.5 766.5,718.5" fill="#00FFFF" stroke="#000" stroke-width="1"/>
<path d="M766.5,701.5H774.5" stroke="#000" stroke-width="1"/>
<rect x="774.5" y="707.5" width="6" height="4" fill="#00FFFF" stroke="#000" stroke-width="1"/>
<circle cx="777.5" cy="716" r="3" fill="#00FFFF" stroke="#000" stroke-width="1" shape-rendering="auto"/>
<path d="M772.5,698V675M767.5,696.5H772.5M767.5,696.5L771.5,691.5L772.5,691M772.5,688.5L767.5,685L771.5,680L772.5,679M770.5,675.5H772.5M781.5,698V675M781.5,697L783.5,697.5L786.5,693.5L781.5,690.5M782.5,688L786.5,683L781.5,679M781.5,675.5H783.5" stroke="#00FFFF" stroke-width="1" fill="none"/>
<path d="M243.5,195.5V179.5H253.5V171.0A7.5,7.5 0 0 1 268.5,171.0V195.5Z" fill="#00FFFF" stroke="#000" stroke-width="1"/>
<circle cx="260.5" cy="172.0" r="1.8" fill="#00FFFF" stroke="#000" stroke-width="1" shape-rendering="auto"/>
<path d="M439.5,195.5V179.5H449.5V171.5A7.5,7.5 0 0 1 464.5,171.5V195.5Z" fill="#00FFFF" stroke="#000" stroke-width="1"/>
<circle cx="456.5" cy="172.5" r="1.8" fill="#00FFFF" stroke="#000" stroke-width="1" shape-rendering="auto"/>
<path d="M612.5,195.5V179.5H622.5V172.0A7.5,7.5 0 0 1 637.5,172.0V195.5Z" fill="#00FFFF" stroke="#000" stroke-width="1"/>
<circle cx="629.5" cy="173.0" r="1.8" fill="#00FFFF" stroke="#000" stroke-width="1" shape-rendering="auto"/>
<polygon points="184.5,150.5 231.5,161.5 231.5,186.5 184.5,186.5" fill="#00FFFF" stroke="#000" stroke-width="1"/>
<rect x="174.5" y="142.5" width="10" height="53" fill="#00FFFF" stroke="#000" stroke-width="1"/>
<rect x="231.5" y="150.5" width="10" height="45" fill="#00FFFF" stroke="#000" stroke-width="1"/>
<path d="M185,160.5h4l2,1h3M195,162.5h4l2,1h3M208,164.5h4l2,1h3M220,166.5h4l2,1h3M185,170.5h4l2,1h3M195,172.5h4l2,1h3M208,174.5h4l2,1h3M220,176.5h4l2,1h3" stroke="#000" stroke-width="1" fill="none"/>
<path d="M24.5,193.5L18.5,188.5V180.5Q18.5,176.5 24.5,176.5Q30.5,176.5 30.5,182.5" stroke="#000" stroke-width="3" fill="none"/>
<path d="M24.5,193.5L18.5,188.5V180.5Q18.5,176.5 24.5,176.5Q30.5,176.5 30.5,182.5" stroke="#00FFFF" stroke-width="1" fill="none"/>
<circle cx="30" cy="186" r="3.5" fill="#00FFFF" stroke="#000" stroke-width="1" shape-rendering="auto"/>
<circle cx="44" cy="186.5" r="3" fill="#00FFFF" stroke="#000" stroke-width="1" shape-rendering="auto"/>
<rect x="49.5" y="190.5" width="3" height="3" fill="#00FFFF" stroke="#000" stroke-width="1"/>
<rect x="23.5" y="189.5" width="26" height="5" fill="#00FFFF" stroke="#000" stroke-width="1"/>
<path d="M64.5,193.5L58.5,188.5V180.5Q58.5,176.5 64.5,176.5Q70.5,176.5 70.5,182.5" stroke="#000" stroke-width="3" fill="none"/>
<path d="M64.5,193.5L58.5,188.5V180.5Q58.5,176.5 64.5,176.5Q70.5,176.5 70.5,182.5" stroke="#00FFFF" stroke-width="1" fill="none"/>
<circle cx="70" cy="186" r="3.5" fill="#00FFFF" stroke="#000" stroke-width="1" shape-rendering="auto"/>
<circle cx="84" cy="186.5" r="3" fill="#00FFFF" stroke="#000" stroke-width="1" shape-rendering="auto"/>
<rect x="89.5" y="190.5" width="3" height="3" fill="#00FFFF" stroke="#000" stroke-width="1"/>
<rect x="63.5" y="189.5" width="26" height="5" fill="#00FFFF" stroke="#000" stroke-width="1"/>
<rect x="389.5" y="163.5" width="6" height="27" fill="#00FFFF" stroke="#000" stroke-width="1"/>
<rect x="395.5" y="160.5" width="37" height="17" fill="#00FFFF" stroke="#000" stroke-width="1"/>
<rect x="401.5" y="163.5" width="24" height="11" fill="#00FFFF" stroke="#000" stroke-width="1"/>
<circle cx="407.8" cy="169" r="2.5" fill="none" stroke="#000" stroke-width="1" shape-rendering="auto"/>
<rect x="396.5" y="157.5" width="4" height="3" fill="#00FFFF" stroke="#000" stroke-width="1"/>
<rect x="432.5" y="166.5" width="2" height="5" fill="#00FFFF" stroke="#000" stroke-width="1"/>
<polygon points="403.5,177.5 422.5,177.5 415.5,188.5 410.5,188.5" fill="#00FFFF" stroke="#000" stroke-width="1"/>
<rect x="410.5" y="188.5" width="5" height="2" fill="#00FFFF" stroke="#000" stroke-width="1"/>
<rect x="429.5" y="177.5" width="3" height="18" fill="#00FFFF" stroke="#000" stroke-width="1"/>
<path d="M392.5,195.5V181.5Q392.5,177.5 396.5,177.5H398.5V195.5Z" fill="#00FFFF" stroke="#000" stroke-width="1"/>
<rect x="398.5" y="184.5" width="9" height="9" rx="1" fill="#00FFFF" stroke="#000" stroke-width="1"/>
<rect x="399.5" y="182.5" width="2" height="2" fill="#00FFFF" stroke="#000" stroke-width="1"/>
<rect x="562.5" y="163.5" width="6" height="27" fill="#00FFFF" stroke="#000" stroke-width="1"/>
<rect x="568.5" y="160.5" width="37" height="17" fill="#00FFFF" stroke="#000" stroke-width="1"/>
<rect x="574.5" y="163.5" width="24" height="11" fill="#00FFFF" stroke="#000" stroke-width="1"/>
<rect x="569.5" y="157.5" width="4" height="3" fill="#00FFFF" stroke="#000" stroke-width="1"/>
<rect x="605.5" y="166.5" width="2" height="5" fill="#00FFFF" stroke="#000" stroke-width="1"/>
<polygon points="576.5,177.5 595.5,177.5 588.5,188.5 583.5,188.5" fill="#00FFFF" stroke="#000" stroke-width="1"/>
<rect x="583.5" y="188.5" width="5" height="2" fill="#00FFFF" stroke="#000" stroke-width="1"/>
<rect x="602.5" y="177.5" width="3" height="18" fill="#00FFFF" stroke="#000" stroke-width="1"/>
<path d="M565.5,195.5V181.5Q565.5,177.5 569.5,177.5H571.5V195.5Z" fill="#00FFFF" stroke="#000" stroke-width="1"/>
<rect x="571.5" y="184.5" width="9" height="9" rx="1" fill="#00FFFF" stroke="#000" stroke-width="1"/>
<rect x="572.5" y="182.5" width="2" height="2" fill="#00FFFF" stroke="#000" stroke-width="1"/>
<polygon points="456.5,236.5 466.5,236.5 466.5,269.5 410.5,269.5 401.5,276.5 401.5,255.5 452.5,255.5 452.5,252.5 459.5,250.5 459.5,244.5 456.5,241.5" fill="#00FFFF" stroke="#000" stroke-width="1"/>
<path d="M459.5,245.5H466.5" stroke="#000" stroke-width="1"/>
<rect x="457.5" y="234.5" width="5" height="2" fill="#00FFFF" stroke="#000" stroke-width="1"/>
<rect x="458.5" y="238.5" width="4" height="3" fill="#00FFFF" stroke="#000" stroke-width="1"/>
<circle cx="459.5" cy="262.5" r="3" fill="#00FFFF" stroke="#000" stroke-width="1" shape-rendering="auto"/>
<rect x="404.5" y="261.5" width="5" height="4" fill="#00FFFF" stroke="#000" stroke-width="1"/>
<rect x="416.5" y="257.5" width="28" height="10" fill="#505050" stroke="#000" stroke-width="1"/>
<path d="M441,265h-5l-3,-3h-6l-2,2h-6M442,261h-4l-3,2h-5M428,260h-4l-3,2h-3" stroke="#00FFFF" stroke-width="2" fill="none"/>
<circle cx="429.5" cy="256" r="4.5" fill="#9A9A9A"/>
<circle cx="429.5" cy="256" r="4.5" fill="none" stroke="#DADADA" stroke-width="1.5" stroke-dasharray="1.5 1.2"/>
<circle cx="429.5" cy="256" r="2" fill="none" stroke="#E8E8E8" stroke-width="1" stroke-dasharray="1 1"/>
<path d="M430,252V248.5H417.5V246.0" stroke="#FFFFFF" stroke-width="1.5" fill="none"/>
<polygon points="632.5,236.5 642.5,236.5 642.5,250.5 649.5,252.5 649.5,256.5 700.5,256.5 700.5,276.5 697.5,276.5 691.5,269.5 635.5,269.5 635.5,244.5 632.5,241.5" fill="#00FFFF" stroke="#000" stroke-width="1"/>
<path d="M635.5,244.5H642.5" stroke="#000" stroke-width="1"/>
<rect x="634.5" y="234.5" width="5" height="2" fill="#00FFFF" stroke="#000" stroke-width="1"/>
<rect x="635.5" y="239.5" width="4" height="3" fill="#00FFFF" stroke="#000" stroke-width="1"/>
<circle cx="641.5" cy="262.5" r="3" fill="#00FFFF" stroke="#000" stroke-width="1" shape-rendering="auto"/>
<rect x="692.5" y="261.5" width="5" height="4" fill="#00FFFF" stroke="#000" stroke-width="1"/>
<rect x="656.5" y="257.5" width="28" height="10" fill="#505050" stroke="#000" stroke-width="1"/>
<path d="M659,265h5l3,-3h6l2,2h6M658,261h4l3,2h5M672,260h4l3,2h3" stroke="#00FFFF" stroke-width="2" fill="none"/>
<circle cx="672.5" cy="256" r="4.5" fill="#9A9A9A"/>
<circle cx="672.5" cy="256" r="4.5" fill="none" stroke="#DADADA" stroke-width="1.5" stroke-dasharray="1.5 1.2"/>
<circle cx="672.5" cy="256" r="2" fill="none" stroke="#E8E8E8" stroke-width="1" stroke-dasharray="1 1"/>
<path d="M672.5,252V248.5H685V246.0" stroke="#FFFFFF" stroke-width="1.5" fill="none"/>
<polygon points="815.5,152.5 825.5,152.5 825.5,166.5 832.5,169.5 832.5,171.5 883.5,171.5 883.5,192.5 880.5,192.5 874.5,185.5 818.5,185.5 818.5,162.5 815.5,157.5" fill="#00FFFF" stroke="#000" stroke-width="1"/>
<path d="M818.5,162.5H825.5" stroke="#000" stroke-width="1"/>
<rect x="818.5" y="150.5" width="5" height="2" fill="#00FFFF" stroke="#000" stroke-width="1"/>
<circle cx="824.5" cy="178.5" r="3" fill="#00FFFF" stroke="#000" stroke-width="1" shape-rendering="auto"/>
<rect x="839.5" y="173.5" width="28" height="10" fill="#505050" stroke="#000" stroke-width="1"/>
<path d="M842,181h5l3,-3h6l2,2h6M841,177h4l3,2h5M855,176h4l3,2h3" stroke="#00FFFF" stroke-width="2" fill="none"/>
<circle cx="855.5" cy="172.5" r="4.5" fill="#9A9A9A"/>
<circle cx="855.5" cy="172.5" r="4.5" fill="none" stroke="#DADADA" stroke-width="1.5" stroke-dasharray="1.5 1.2"/>
<circle cx="855.5" cy="172.5" r="2" fill="none" stroke="#E8E8E8" stroke-width="1" stroke-dasharray="1 1"/>
<path d="M855.5,169V164H868V161.5" stroke="#FFFFFF" stroke-width="1.5" fill="none"/>
<text x="322" y="235.8" font-size="12" font-weight="bold" fill="#fff" textLength="56" lengthAdjust="spacingAndGlyphs">Акватрон</text>
<rect x="320.5" y="243.5" width="60" height="12" fill="#ECE9D8" stroke="#000" stroke-width="1"/>
<rect x="320.5" y="259.5" width="60" height="12" fill="#66FFFF" stroke="#000" stroke-width="1"/>
<rect x="405" y="386" width="3" height="218" fill="#5CE2E2"/>
<polygon points="405,386 410,380 413,380 408,386" fill="#5CE2E2"/>
<rect x="411" y="380" width="1" height="1" fill="#D8C8C0"/>
<polygon points="383,386 388,379 410,379 405,386" fill="#409C9C"/>
<rect x="383" y="386" width="22" height="218" fill="#50C4C4"/>
<polygon points="383,604 408,604 395.5,610" fill="#409C9C"/>
<rect x="391.5" y="392.5" width="6" height="4" fill="#00FFFF" stroke="#000" stroke-width="1"/>
<rect x="384" y="479" width="21" height="11" fill="#ECE9D8"/>
<text x="385" y="489" font-size="10" font-weight="normal" fill="#000" textLength="19" lengthAdjust="spacingAndGlyphs">Б-13</text>
<rect x="430" y="386" width="3" height="218" fill="#5CE2E2"/>
<polygon points="430,386 435,380 438,380 433,386" fill="#5CE2E2"/>
<rect x="436" y="380" width="1" height="1" fill="#D8C8C0"/>
<polygon points="408,386 413,379 435,379 430,386" fill="#409C9C"/>
<rect x="408" y="386" width="22" height="218" fill="#50C4C4"/>
<polygon points="408,604 433,604 420.5,610" fill="#409C9C"/>
<rect x="416.5" y="392.5" width="6" height="4" fill="#00FFFF" stroke="#000" stroke-width="1"/>
<rect x="409" y="479" width="21" height="11" fill="#ECE9D8"/>
<text x="410" y="489" font-size="10" font-weight="normal" fill="#000" textLength="19" lengthAdjust="spacingAndGlyphs">Б-14</text>
<rect x="455" y="386" width="3" height="218" fill="#5CE2E2"/>
<polygon points="455,386 460,380 463,380 458,386" fill="#5CE2E2"/>
<rect x="461" y="380" width="1" height="1" fill="#D8C8C0"/>
<polygon points="433,386 438,379 460,379 455,386" fill="#409C9C"/>
<rect x="433" y="386" width="22" height="218" fill="#50C4C4"/>
<polygon points="433,604 458,604 445.5,610" fill="#409C9C"/>
<rect x="441.5" y="392.5" width="6" height="4" fill="#00FFFF" stroke="#000" stroke-width="1"/>
<rect x="434" y="479" width="21" height="11" fill="#ECE9D8"/>
<text x="435" y="489" font-size="10" font-weight="normal" fill="#000" textLength="19" lengthAdjust="spacingAndGlyphs">Б-15</text>
<rect x="480" y="386" width="3" height="218" fill="#5CE2E2"/>
<polygon points="480,386 485,380 488,380 483,386" fill="#5CE2E2"/>
<rect x="486" y="380" width="1" height="1" fill="#D8C8C0"/>
<polygon points="458,386 463,379 485,379 480,386" fill="#409C9C"/>
<rect x="458" y="386" width="22" height="218" fill="#50C4C4"/>
<polygon points="458,604 483,604 470.5,610" fill="#409C9C"/>
<rect x="466.5" y="392.5" width="6" height="4" fill="#00FFFF" stroke="#000" stroke-width="1"/>
<rect x="459" y="479" width="21" height="11" fill="#ECE9D8"/>
<text x="460" y="489" font-size="10" font-weight="normal" fill="#000" textLength="19" lengthAdjust="spacingAndGlyphs">Б-16</text>
<rect x="505" y="386" width="3" height="218" fill="#5CE2E2"/>
<polygon points="505,386 510,380 513,380 508,386" fill="#5CE2E2"/>
<rect x="511" y="380" width="1" height="1" fill="#D8C8C0"/>
<polygon points="483,386 488,379 510,379 505,386" fill="#409C9C"/>
<rect x="483" y="386" width="22" height="218" fill="#50C4C4"/>
<polygon points="483,604 508,604 495.5,610" fill="#409C9C"/>
<rect x="491.5" y="392.5" width="6" height="4" fill="#00FFFF" stroke="#000" stroke-width="1"/>
<rect x="484" y="479" width="21" height="11" fill="#ECE9D8"/>
<text x="485" y="489" font-size="10" font-weight="normal" fill="#000" textLength="19" lengthAdjust="spacingAndGlyphs">Б-17</text>
<rect x="530" y="386" width="3" height="218" fill="#5CE2E2"/>
<polygon points="530,386 535,380 538,380 533,386" fill="#5CE2E2"/>
<rect x="536" y="380" width="1" height="1" fill="#D8C8C0"/>
<polygon points="508,386 513,379 535,379 530,386" fill="#409C9C"/>
<rect x="508" y="386" width="22" height="218" fill="#50C4C4"/>
<polygon points="508,604 533,604 520.5,610" fill="#409C9C"/>
<rect x="516.5" y="392.5" width="6" height="4" fill="#00FFFF" stroke="#000" stroke-width="1"/>
<rect x="509" y="479" width="21" height="11" fill="#ECE9D8"/>
<text x="510" y="489" font-size="10" font-weight="normal" fill="#000" textLength="19" lengthAdjust="spacingAndGlyphs">Б-18</text>
<rect x="555" y="386" width="3" height="218" fill="#5CE2E2"/>
<polygon points="555,386 560,380 563,380 558,386" fill="#5CE2E2"/>
<rect x="561" y="380" width="1" height="1" fill="#D8C8C0"/>
<polygon points="533,386 538,379 560,379 555,386" fill="#409C9C"/>
<rect x="533" y="386" width="22" height="218" fill="#50C4C4"/>
<polygon points="533,604 558,604 545.5,610" fill="#409C9C"/>
<rect x="541.5" y="392.5" width="6" height="4" fill="#00FFFF" stroke="#000" stroke-width="1"/>
<rect x="534" y="479" width="21" height="11" fill="#ECE9D8"/>
<text x="535" y="489" font-size="10" font-weight="normal" fill="#000" textLength="19" lengthAdjust="spacingAndGlyphs">Б-19</text>
<rect x="580" y="386" width="4.5" height="218" fill="#5CE2E2"/>
<polygon points="580,386 584.5,380 584.5,386" fill="#5CE2E2"/>
<polygon points="558,386 563,379 585,379 580,386" fill="#409C9C"/>
<rect x="558" y="386" width="22" height="218" fill="#50C4C4"/>
<polygon points="558,604 583,604 570.5,610" fill="#409C9C"/>
<rect x="566.5" y="392.5" width="6" height="4" fill="#00FFFF" stroke="#000" stroke-width="1"/>
<rect x="559" y="479" width="21" height="11" fill="#ECE9D8"/>
<text x="560" y="489" font-size="10" font-weight="normal" fill="#000" textLength="19" lengthAdjust="spacingAndGlyphs">Б-20</text>
<rect x="566.5" y="404.5" width="6" height="4" fill="#00FFFF" stroke="#000" stroke-width="1"/>
<rect x="654" y="386" width="3" height="218" fill="#5CE2E2"/>
<polygon points="654,386 659,380 662,380 657,386" fill="#5CE2E2"/>
<rect x="660" y="380" width="1" height="1" fill="#D8C8C0"/>
<polygon points="632,386 637,379 659,379 654,386" fill="#409C9C"/>
<rect x="632" y="386" width="22" height="218" fill="#50C4C4"/>
<polygon points="632,604 657,604 644.5,610" fill="#409C9C"/>
<rect x="640.5" y="392.5" width="6" height="4" fill="#00FFFF" stroke="#000" stroke-width="1"/>
<rect x="633" y="479" width="21" height="11" fill="#ECE9D8"/>
<text x="634" y="489" font-size="10" font-weight="normal" fill="#000" textLength="19" lengthAdjust="spacingAndGlyphs">Б-27</text>
<rect x="679" y="386" width="3" height="218" fill="#5CE2E2"/>
<polygon points="679,386 684,380 687,380 682,386" fill="#5CE2E2"/>
<rect x="685" y="380" width="1" height="1" fill="#D8C8C0"/>
<polygon points="657,386 662,379 684,379 679,386" fill="#409C9C"/>
<rect x="657" y="386" width="22" height="218" fill="#50C4C4"/>
<polygon points="657,604 682,604 669.5,610" fill="#409C9C"/>
<rect x="665.5" y="392.5" width="6" height="4" fill="#00FFFF" stroke="#000" stroke-width="1"/>
<rect x="658" y="479" width="21" height="11" fill="#ECE9D8"/>
<text x="659" y="489" font-size="10" font-weight="normal" fill="#000" textLength="19" lengthAdjust="spacingAndGlyphs">Б-26</text>
<rect x="704" y="386" width="3" height="218" fill="#5CE2E2"/>
<polygon points="704,386 709,380 712,380 707,386" fill="#5CE2E2"/>
<rect x="710" y="380" width="1" height="1" fill="#D8C8C0"/>
<polygon points="682,386 687,379 709,379 704,386" fill="#409C9C"/>
<rect x="682" y="386" width="22" height="218" fill="#50C4C4"/>
<polygon points="682,604 707,604 694.5,610" fill="#409C9C"/>
<rect x="690.5" y="392.5" width="6" height="4" fill="#00FFFF" stroke="#000" stroke-width="1"/>
<rect x="683" y="479" width="21" height="11" fill="#ECE9D8"/>
<text x="684" y="489" font-size="10" font-weight="normal" fill="#000" textLength="19" lengthAdjust="spacingAndGlyphs">Б-25</text>
<rect x="729" y="386" width="3" height="218" fill="#5CE2E2"/>
<polygon points="729,386 734,380 737,380 732,386" fill="#5CE2E2"/>
<rect x="735" y="380" width="1" height="1" fill="#D8C8C0"/>
<polygon points="707,386 712,379 734,379 729,386" fill="#409C9C"/>
<rect x="707" y="386" width="22" height="218" fill="#50C4C4"/>
<polygon points="707,604 732,604 719.5,610" fill="#409C9C"/>
<rect x="715.5" y="392.5" width="6" height="4" fill="#00FFFF" stroke="#000" stroke-width="1"/>
<rect x="708" y="479" width="21" height="11" fill="#ECE9D8"/>
<text x="709" y="489" font-size="10" font-weight="normal" fill="#000" textLength="19" lengthAdjust="spacingAndGlyphs">Б-24</text>
<rect x="754" y="386" width="3" height="218" fill="#5CE2E2"/>
<polygon points="754,386 759,380 762,380 757,386" fill="#5CE2E2"/>
<rect x="760" y="380" width="1" height="1" fill="#D8C8C0"/>
<polygon points="732,386 737,379 759,379 754,386" fill="#409C9C"/>
<rect x="732" y="386" width="22" height="218" fill="#50C4C4"/>
<polygon points="732,604 757,604 744.5,610" fill="#409C9C"/>
<rect x="740.5" y="392.5" width="6" height="4" fill="#00FFFF" stroke="#000" stroke-width="1"/>
<rect x="733" y="479" width="21" height="11" fill="#ECE9D8"/>
<text x="734" y="489" font-size="10" font-weight="normal" fill="#000" textLength="19" lengthAdjust="spacingAndGlyphs">Б-23</text>
<rect x="779" y="386" width="3" height="218" fill="#5CE2E2"/>
<polygon points="779,386 784,380 787,380 782,386" fill="#5CE2E2"/>
<rect x="785" y="380" width="1" height="1" fill="#D8C8C0"/>
<polygon points="757,386 762,379 784,379 779,386" fill="#409C9C"/>
<rect x="757" y="386" width="22" height="218" fill="#50C4C4"/>
<polygon points="757,604 782,604 769.5,610" fill="#409C9C"/>
<rect x="765.5" y="392.5" width="6" height="4" fill="#00FFFF" stroke="#000" stroke-width="1"/>
<rect x="758" y="479" width="21" height="11" fill="#ECE9D8"/>
<text x="759" y="489" font-size="10" font-weight="normal" fill="#000" textLength="19" lengthAdjust="spacingAndGlyphs">Б-22</text>
<rect x="804" y="386" width="4.5" height="218" fill="#5CE2E2"/>
<polygon points="804,386 808.5,380 808.5,386" fill="#5CE2E2"/>
<polygon points="782,386 787,379 809,379 804,386" fill="#409C9C"/>
<rect x="782" y="386" width="22" height="218" fill="#50C4C4"/>
<polygon points="782,604 807,604 794.5,610" fill="#409C9C"/>
<rect x="790.5" y="392.5" width="6" height="4" fill="#00FFFF" stroke="#000" stroke-width="1"/>
<rect x="783" y="479" width="21" height="11" fill="#ECE9D8"/>
<text x="784" y="489" font-size="10" font-weight="normal" fill="#000" textLength="19" lengthAdjust="spacingAndGlyphs">Б-21</text>
<rect x="383.5" y="345.5" width="196" height="10" fill="#00FFFF" stroke="#000" stroke-width="1"/>
<rect x="390.5" y="349.5" width="183" height="2" fill="#00FFFF" stroke="#000" stroke-width="1"/>
<path d="M390.5,346v3M390.5,352v3M398.5,346v3M398.5,352v3M406.5,346v3M406.5,352v3M414.5,346v3M414.5,352v3M422.5,346v3M422.5,352v3M430.5,346v3M430.5,352v3M438.5,346v3M438.5,352v3M446.5,346v3M446.5,352v3M454.5,346v3M454.5,352v3M462.5,346v3M462.5,352v3M470.5,346v3M470.5,352v3M478.5,346v3M478.5,352v3M486.5,346v3M486.5,352v3M494.5,346v3M494.5,352v3M502.5,346v3M502.5,352v3M510.5,346v3M510.5,352v3M518.5,346v3M518.5,352v3M526.5,346v3M526.5,352v3M534.5,346v3M534.5,352v3M542.5,346v3M542.5,352v3M550.5,346v3M550.5,352v3M558.5,346v3M558.5,352v3M566.5,346v3M566.5,352v3" stroke="#9C8888" stroke-width="1" fill="none"/>
<path d="M385,350.5H390M574,350.5H578" stroke="#9C8888" stroke-width="1" fill="none"/>
<rect x="378.5" y="343.5" width="5" height="14" fill="#00FFFF" stroke="#000" stroke-width="1"/>
<rect x="578.5" y="343.5" width="5" height="14" fill="#00FFFF" stroke="#000" stroke-width="1"/>
<rect x="625.5" y="345.5" width="181" height="10" fill="#00FFFF" stroke="#000" stroke-width="1"/>
<rect x="631.5" y="349.5" width="171" height="2" fill="#00FFFF" stroke="#000" stroke-width="1"/>
<path d="M631.5,346v3M631.5,352v3M639.5,346v3M639.5,352v3M647.5,346v3M647.5,352v3M655.5,346v3M655.5,352v3M663.5,346v3M663.5,352v3M671.5,346v3M671.5,352v3M679.5,346v3M679.5,352v3M687.5,346v3M687.5,352v3M695.5,346v3M695.5,352v3M703.5,346v3M703.5,352v3M711.5,346v3M711.5,352v3M719.5,346v3M719.5,352v3M727.5,346v3M727.5,352v3M735.5,346v3M735.5,352v3M743.5,346v3M743.5,352v3M751.5,346v3M751.5,352v3M759.5,346v3M759.5,352v3M767.5,346v3M767.5,352v3M775.5,346v3M775.5,352v3M783.5,346v3M783.5,352v3M791.5,346v3M791.5,352v3M799.5,346v3M799.5,352v3" stroke="#9C8888" stroke-width="1" fill="none"/>
<path d="M627,350.5H631M803,350.5H805" stroke="#9C8888" stroke-width="1" fill="none"/>
<rect x="620.5" y="343.5" width="5" height="14" fill="#00FFFF" stroke="#000" stroke-width="1"/>
<rect x="805.5" y="343.5" width="5" height="14" fill="#00FFFF" stroke="#000" stroke-width="1"/>
<rect x="383.5" y="648.5" width="196" height="10" fill="#00FFFF" stroke="#000" stroke-width="1"/>
<rect x="390.5" y="652.5" width="183" height="2" fill="#00FFFF" stroke="#000" stroke-width="1"/>
<path d="M390.5,649v3M390.5,655v3M398.5,649v3M398.5,655v3M406.5,649v3M406.5,655v3M414.5,649v3M414.5,655v3M422.5,649v3M422.5,655v3M430.5,649v3M430.5,655v3M438.5,649v3M438.5,655v3M446.5,649v3M446.5,655v3M454.5,649v3M454.5,655v3M462.5,649v3M462.5,655v3M470.5,649v3M470.5,655v3M478.5,649v3M478.5,655v3M486.5,649v3M486.5,655v3M494.5,649v3M494.5,655v3M502.5,649v3M502.5,655v3M510.5,649v3M510.5,655v3M518.5,649v3M518.5,655v3M526.5,649v3M526.5,655v3M534.5,649v3M534.5,655v3M542.5,649v3M542.5,655v3M550.5,649v3M550.5,655v3M558.5,649v3M558.5,655v3M566.5,649v3M566.5,655v3" stroke="#9C8888" stroke-width="1" fill="none"/>
<path d="M385,653.5H390M574,653.5H578" stroke="#9C8888" stroke-width="1" fill="none"/>
<rect x="378.5" y="646.5" width="5" height="14" fill="#00FFFF" stroke="#000" stroke-width="1"/>
<rect x="578.5" y="646.5" width="5" height="14" fill="#00FFFF" stroke="#000" stroke-width="1"/>
<rect x="637.5" y="648.5" width="163" height="10" fill="#00FFFF" stroke="#000" stroke-width="1"/>
<rect x="644.5" y="652.5" width="152" height="2" fill="#00FFFF" stroke="#000" stroke-width="1"/>
<path d="M644.5,649v3M644.5,655v3M652.5,649v3M652.5,655v3M660.5,649v3M660.5,655v3M668.5,649v3M668.5,655v3M676.5,649v3M676.5,655v3M684.5,649v3M684.5,655v3M692.5,649v3M692.5,655v3M700.5,649v3M700.5,655v3M708.5,649v3M708.5,655v3M716.5,649v3M716.5,655v3M724.5,649v3M724.5,655v3M732.5,649v3M732.5,655v3M740.5,649v3M740.5,655v3M748.5,649v3M748.5,655v3M756.5,649v3M756.5,655v3M764.5,649v3M764.5,655v3M772.5,649v3M772.5,655v3M780.5,649v3M780.5,655v3M788.5,649v3M788.5,655v3" stroke="#9C8888" stroke-width="1" fill="none"/>
<path d="M639,653.5H644M797,653.5H799" stroke="#9C8888" stroke-width="1" fill="none"/>
<rect x="632.5" y="646.5" width="5" height="14" fill="#00FFFF" stroke="#000" stroke-width="1"/>
<rect x="799.5" y="646.5" width="5" height="14" fill="#00FFFF" stroke="#000" stroke-width="1"/>
<path d="M409.5,628.5H569.5M643.5,628.5H793.5" stroke="#FFFFFF" stroke-width="1" fill="none"/>
<path d="M409.5,636V645" stroke="#FFFFFF" stroke-width="1" fill="none"/>
<path d="M457.5,636V645" stroke="#FFFFFF" stroke-width="1" fill="none"/>
<path d="M507.5,636V645" stroke="#FFFFFF" stroke-width="1" fill="none"/>
<path d="M544.5,636V645" stroke="#FFFFFF" stroke-width="1" fill="none"/>
<path d="M569.5,636V645" stroke="#FFFFFF" stroke-width="1" fill="none"/>
<path d="M643.5,636V645" stroke="#FFFFFF" stroke-width="1" fill="none"/>
<path d="M667.5,636V645" stroke="#FFFFFF" stroke-width="1" fill="none"/>
<path d="M705.5,636V645" stroke="#FFFFFF" stroke-width="1" fill="none"/>
<path d="M755.5,636V645" stroke="#FFFFFF" stroke-width="1" fill="none"/>
<path d="M793.5,636V645" stroke="#FFFFFF" stroke-width="1" fill="none"/>
<path d="M393.5,610V616.5H419.5V610M409.5,616.5V621" stroke="#FFFFFF" stroke-width="1" fill="none"/>
<path d="M444.5,610V616.5H469.5V610M457.5,616.5V621" stroke="#FFFFFF" stroke-width="1" fill="none"/>
<path d="M493.5,610V616.5H519.5V610M507.5,616.5V621" stroke="#FFFFFF" stroke-width="1" fill="none"/>
<path d="M544.5,610V621M569.5,610V621" stroke="#FFFFFF" stroke-width="1" fill="none"/>
<path d="M692.5,610V616.5H718.5V610M705.5,616.5V621" stroke="#FFFFFF" stroke-width="1" fill="none"/>
<path d="M742.5,610V616.5H768.5V610M755.5,616.5V621" stroke="#FFFFFF" stroke-width="1" fill="none"/>
<path d="M643.5,610V621M667.5,610V621M793.5,610V621" stroke="#FFFFFF" stroke-width="1" fill="none"/>
<rect x="408.0" y="615" width="3" height="3" fill="#FFFFFF"/>
<rect x="456.0" y="615" width="3" height="3" fill="#FFFFFF"/>
<rect x="506.0" y="615" width="3" height="3" fill="#FFFFFF"/>
<rect x="704.0" y="615" width="3" height="3" fill="#FFFFFF"/>
<rect x="754.0" y="615" width="3" height="3" fill="#FFFFFF"/>
<circle cx="409.5" cy="628.5" r="7" fill="#00FFFF" stroke="#000" stroke-width="1" shape-rendering="auto"/>
<circle cx="409.5" cy="628.5" r="3.5" fill="#00FFFF" stroke="#000" stroke-width="1" shape-rendering="auto"/>
<path d="M404.5,623.5L407.0,626.0M414.5,623.5L412.0,626.0M404.5,633.5L407.0,631.0M414.5,633.5L412.0,631.0" stroke="#000" stroke-width="1" shape-rendering="auto"/>
<circle cx="457.5" cy="628.5" r="7" fill="#00FFFF" stroke="#000" stroke-width="1" shape-rendering="auto"/>
<path d="M452.5,623.5L462.5,633.5M462.5,623.5L452.5,633.5" stroke="#000" stroke-width="1" shape-rendering="auto"/>
<circle cx="507.5" cy="628.5" r="7" fill="#00FFFF" stroke="#000" stroke-width="1" shape-rendering="auto"/>
<path d="M502.5,623.5L512.5,633.5M512.5,623.5L502.5,633.5" stroke="#000" stroke-width="1" shape-rendering="auto"/>
<circle cx="544.5" cy="628.5" r="7" fill="#00FFFF" stroke="#000" stroke-width="1" shape-rendering="auto"/>
<path d="M539.5,623.5L549.5,633.5M549.5,623.5L539.5,633.5" stroke="#000" stroke-width="1" shape-rendering="auto"/>
<circle cx="569.5" cy="628.5" r="7" fill="#00FFFF" stroke="#000" stroke-width="1" shape-rendering="auto"/>
<path d="M564.5,623.5L574.5,633.5M574.5,623.5L564.5,633.5" stroke="#000" stroke-width="1" shape-rendering="auto"/>
<circle cx="643.5" cy="628.5" r="7" fill="#00FFFF" stroke="#000" stroke-width="1" shape-rendering="auto"/>
<path d="M638.5,623.5L648.5,633.5M648.5,623.5L638.5,633.5" stroke="#000" stroke-width="1" shape-rendering="auto"/>
<circle cx="667.5" cy="628.5" r="7" fill="#00FFFF" stroke="#000" stroke-width="1" shape-rendering="auto"/>
<path d="M662.5,623.5L672.5,633.5M672.5,623.5L662.5,633.5" stroke="#000" stroke-width="1" shape-rendering="auto"/>
<circle cx="705.5" cy="628.5" r="7" fill="#00FFFF" stroke="#000" stroke-width="1" shape-rendering="auto"/>
<path d="M700.5,623.5L710.5,633.5M710.5,623.5L700.5,633.5" stroke="#000" stroke-width="1" shape-rendering="auto"/>
<circle cx="755.5" cy="628.5" r="7" fill="#00FFFF" stroke="#000" stroke-width="1" shape-rendering="auto"/>
<path d="M750.5,623.5L760.5,633.5M760.5,623.5L750.5,633.5" stroke="#000" stroke-width="1" shape-rendering="auto"/>
<circle cx="793.5" cy="628.5" r="7" fill="#00FFFF" stroke="#000" stroke-width="1" shape-rendering="auto"/>
<circle cx="793.5" cy="628.5" r="3.5" fill="#00FFFF" stroke="#000" stroke-width="1" shape-rendering="auto"/>
<path d="M788.5,623.5L791.0,626.0M798.5,623.5L796.0,626.0M788.5,633.5L791.0,631.0M798.5,633.5L796.0,631.0" stroke="#000" stroke-width="1" shape-rendering="auto"/>
<path d="M396.5,358V379" stroke="#FFFFFF" stroke-width="1" fill="none"/>
<path d="M421.5,358V379" stroke="#FFFFFF" stroke-width="1" fill="none"/>
<path d="M446.5,358V379" stroke="#FFFFFF" stroke-width="1" fill="none"/>
<path d="M471.5,358V379" stroke="#FFFFFF" stroke-width="1" fill="none"/>
<path d="M496.5,358V379" stroke="#FFFFFF" stroke-width="1" fill="none"/>
<path d="M521.5,358V379" stroke="#FFFFFF" stroke-width="1" fill="none"/>
<path d="M546.5,358V379" stroke="#FFFFFF" stroke-width="1" fill="none"/>
<path d="M571.5,358V379" stroke="#FFFFFF" stroke-width="1" fill="none"/>
<path d="M647.5,358V379" stroke="#FFFFFF" stroke-width="1" fill="none"/>
<path d="M672.5,358V379" stroke="#FFFFFF" stroke-width="1" fill="none"/>
<path d="M697.5,358V379" stroke="#FFFFFF" stroke-width="1" fill="none"/>
<path d="M722.5,358V379" stroke="#FFFFFF" stroke-width="1" fill="none"/>
<path d="M747.5,358V379" stroke="#FFFFFF" stroke-width="1" fill="none"/>
<path d="M772.5,358V379" stroke="#FFFFFF" stroke-width="1" fill="none"/>
<path d="M797.5,358V379" stroke="#FFFFFF" stroke-width="1" fill="none"/>
<rect x="568.5" y="363.5" width="6" height="4" fill="#00FFFF" stroke="#000" stroke-width="1"/>
<rect x="793.5" y="363.5" width="6" height="4" fill="#00FFFF" stroke="#000" stroke-width="1"/>
<path d="M571.5,661V704" stroke="#FFFFFF" stroke-width="1" fill="none"/>
<rect x="568.5" y="665.5" width="6" height="4" fill="#00FFFF" stroke="#000" stroke-width="1"/>
<path d="M796.5,661V704" stroke="#FFFFFF" stroke-width="1" fill="none"/>
<rect x="793.5" y="665.5" width="6" height="4" fill="#00FFFF" stroke="#000" stroke-width="1"/>
<path d="M54.5,336.5Q69.5,329 84.5,336.5V382.5L73,396.5H66L54.5,382.5Z" fill="#00FFFF" stroke="#000" stroke-width="1"/>
<path d="M54.5,340.5H84.5" stroke="#000" stroke-width="1"/>
<rect x="61.5" y="353.5" width="15" height="23" fill="#00FFFF" stroke="#000" stroke-width="1"/>
<rect x="51.5" y="348.5" width="3" height="13" fill="#00FFFF" stroke="#000" stroke-width="1"/>
<circle cx="69.5" cy="402.5" r="3.5" fill="#00FFFF" stroke="#000" stroke-width="1" shape-rendering="auto"/>
<circle cx="69.5" cy="402.5" r="1.8" fill="#00FFFF" stroke="#000" stroke-width="1" shape-rendering="auto"/>
<path d="M69.5,406V415" stroke="#FFFFFF" stroke-width="1" fill="none"/>
<path d="M45.5,361V351.5H50" stroke="#C8C8C8" stroke-width="1" fill="none"/>
<rect x="30.5" y="346.5" width="6" height="25" fill="#00FFFF" stroke="#000" stroke-width="1"/>
<rect x="36.5" y="355.5" width="2" height="11" fill="#00FFFF" stroke="#000" stroke-width="1"/>
<rect x="17.5" y="354.5" width="13" height="11" fill="#00FFFF" stroke="#000" stroke-width="1"/>
<path d="M19.5,356.5L28.5,363.5M28.5,356.5L19.5,363.5" stroke="#000" stroke-width="1"/>
<rect x="19.5" y="367.5" width="10" height="10" fill="#00FFFF" stroke="#000" stroke-width="1"/>
<polygon points="142.5,315.5 162.5,315.5 162.5,340.5 157.5,352.5 147.5,352.5 142.5,340.5" fill="#55BDBD" stroke="#000" stroke-width="1"/>
<polygon points="143,341 162,341 157,352 148,352" fill="#48A6A6"/>
<rect x="146.5" y="318.5" width="6" height="4" fill="#00FFFF" stroke="#000" stroke-width="1"/>
<rect x="146.5" y="324.5" width="6" height="4" fill="#00FFFF" stroke="#000" stroke-width="1"/>
<rect x="150.5" y="331.5" width="6" height="4" fill="#00FFFF" stroke="#000" stroke-width="1"/>
<rect x="135" y="354" width="7" height="26" fill="#5BB0B0"/>
<rect x="142.5" y="353.5" width="20" height="27" fill="#00FFFF" stroke="#000" stroke-width="1"/>
<rect x="145.5" y="356.5" width="14" height="22" fill="#00FFFF" stroke="#000" stroke-width="1"/>
<rect x="147.5" y="364.5" width="10" height="10" fill="#00FFFF" stroke="#000" stroke-width="1"/>
<path d="M160,352.5h2" stroke="#000" stroke-width="1"/>
<polygon points="135.5,380.5 168.5,380.5 174.5,390.5 174.5,472.5 168.5,479.5 141.5,479.5 129.5,472.5 129.5,390.5" fill="#00FFFF" stroke="#000" stroke-width="2" stroke-linejoin="miter"/>
<path d="M129.5,390.5H174.5M129.5,471.5H174.5" stroke="#000" stroke-width="1"/>
<path d="M135.0,404V400.5L137.5,398L140.0,400.5V404ZM145.0,404V400.5L147.5,398L150.0,400.5V404ZM155.0,404V400.5L157.5,398L160.0,400.5V404ZM165.0,404V400.5L167.5,398L170.0,400.5V404ZM135.0,414V410.5L137.5,408L140.0,410.5V414ZM145.0,414V410.5L147.5,408L150.0,410.5V414ZM155.0,414V410.5L157.5,408L160.0,410.5V414ZM165.0,414V410.5L167.5,408L170.0,410.5V414ZM135.0,424V420.5L137.5,418L140.0,420.5V424ZM145.0,424V420.5L147.5,418L150.0,420.5V424ZM155.0,424V420.5L157.5,418L160.0,420.5V424ZM165.0,424V420.5L167.5,418L170.0,420.5V424ZM135.0,434V430.5L137.5,428L140.0,430.5V434ZM145.0,434V430.5L147.5,428L150.0,430.5V434ZM155.0,434V430.5L157.5,428L160.0,430.5V434ZM165.0,434V430.5L167.5,428L170.0,430.5V434ZM135.0,444V440.5L137.5,438L140.0,440.5V444ZM145.0,444V440.5L147.5,438L150.0,440.5V444ZM155.0,444V440.5L157.5,438L160.0,440.5V444ZM165.0,444V440.5L167.5,438L170.0,440.5V444ZM135.0,454V450.5L137.5,448L140.0,450.5V454ZM145.0,454V450.5L147.5,448L150.0,450.5V454ZM155.0,454V450.5L157.5,448L160.0,450.5V454ZM165.0,454V450.5L167.5,448L170.0,450.5V454ZM135.0,464V460.5L137.5,458L140.0,460.5V464ZM145.0,464V460.5L147.5,458L150.0,460.5V464ZM155.0,464V460.5L157.5,458L160.0,460.5V464ZM165.0,464V460.5L167.5,458L170.0,460.5V464Z" stroke="#888888" stroke-width="1" fill="none"/>
<rect x="149.5" y="384.5" width="6" height="4" fill="#00FFFF" stroke="#000" stroke-width="1"/>
<rect x="149.5" y="395.5" width="6" height="4" fill="#00FFFF" stroke="#000" stroke-width="1"/>
<rect x="149.5" y="405.5" width="6" height="4" fill="#00FFFF" stroke="#000" stroke-width="1"/>
<rect x="142" y="422" width="22" height="11" fill="#ECE9D8"/>
<text x="143" y="432" font-size="10" font-weight="normal" fill="#000" textLength="20" lengthAdjust="spacingAndGlyphs">Б-29</text>
<circle cx="143.5" cy="513.5" r="7" fill="#00FFFF" stroke="#000" stroke-width="1" shape-rendering="auto"/>
<circle cx="143.5" cy="513.5" r="3.5" fill="#00FFFF" stroke="#000" stroke-width="1" shape-rendering="auto"/>
<path d="M138.5,508.5L141,511M148.5,508.5L146,511M138.5,518.5L141,516M148.5,518.5L146,516" stroke="#000" stroke-width="1" shape-rendering="auto"/>
<path d="M39.5,533V543M108.5,532V543M39.5,538.5H46M50,536.5H108M50,540.5H108M50.0,541Q52.0,532 55.0,533Q58.0,534 58.0,538Q58.0,543 61.0,542M61.5,541Q63.5,532 66.5,533Q69.5,534 69.5,538Q69.5,543 72.5,542M73.0,541Q75.0,532 78.0,533Q81.0,534 81.0,538Q81.0,543 84.0,542M84.5,541Q86.5,532 89.5,533Q92.5,534 92.5,538Q92.5,543 95.5,542M96.0,541Q98.0,532 101.0,533Q104.0,534 104.0,538Q104.0,543 107.0,542" stroke="#00FFFF" stroke-width="1" fill="none" shape-rendering="auto"/>
<circle cx="46.5" cy="538" r="3.5" fill="#00FFFF" stroke="#000" stroke-width="1" shape-rendering="auto"/>
<rect x="239.5" y="305.5" width="34" height="31" fill="#20C0C0" stroke="#000" stroke-width="1"/>
<path d="M239.5,321.5H273.5" stroke="#000" stroke-width="1"/>
<rect x="249.5" y="309.5" width="2" height="9" fill="#00FFFF" stroke="#000" stroke-width="1"/>
<rect x="261.5" y="309.5" width="2" height="9" fill="#00FFFF" stroke="#000" stroke-width="1"/>
<rect x="253.5" y="311.5" width="6" height="4" fill="#00FFFF" stroke="#000" stroke-width="1"/>
<rect x="249.5" y="325.5" width="2" height="9" fill="#00FFFF" stroke="#000" stroke-width="1"/>
<rect x="261.5" y="325.5" width="2" height="9" fill="#00FFFF" stroke="#000" stroke-width="1"/>
<rect x="253.5" y="327.5" width="6" height="4" fill="#00FFFF" stroke="#000" stroke-width="1"/>
<rect x="234.5" y="336.5" width="44" height="43" fill="#20C0C0" stroke="#000" stroke-width="1"/>
<path d="M234.5,344.5H278.5" stroke="#000" stroke-width="1"/>
<rect x="235" y="345" width="43" height="7" fill="#00FFFF"/>
<rect x="235" y="355" width="43" height="4" fill="#00FFFF"/>
<rect x="235" y="361" width="43" height="4" fill="#00FFFF"/>
<rect x="235" y="376" width="43" height="3" fill="#00FFFF"/>
<rect x="243.5" y="347.5" width="27" height="4" fill="#00FFFF" stroke="#000" stroke-width="1"/>
<polygon points="235,366 278,366 270,374 243,374" fill="#20C0C0"/>
<polygon points="243.5,370.5 270.5,370.5 268.5,375.5 245.5,375.5" fill="#00FFFF" stroke="#000" stroke-width="1"/>
<path d="M235,366.5L243,374M278,366.5L270,374" stroke="#000" stroke-width="1"/>
<path d="M242.0,336.5v-3h6v3" fill="none" stroke="#000" stroke-width="1"/>
<path d="M250.5,336.5v-3h6v3" fill="none" stroke="#000" stroke-width="1"/>
<path d="M259.0,336.5v-3h6v3" fill="none" stroke="#000" stroke-width="1"/>
<path d="M267.5,336.5v-3h6v3" fill="none" stroke="#000" stroke-width="1"/>
<polygon points="253.5,254.5 271.5,254.5 282.5,265.5 282.5,271.5 278.5,275.5 285.5,284.5 288.5,284.5 288.5,289.5 239.5,289.5 239.5,272.5 245.5,272.5 245.5,261.5 253.5,261.5" fill="#00FFFF" stroke="#000" stroke-width="1"/>
<rect x="247.5" y="240.5" width="24" height="14" fill="#00FFFF" stroke="#000" stroke-width="1"/>
<rect x="247.5" y="240.5" width="6" height="21" fill="#00FFFF" stroke="#000" stroke-width="1"/>
<path d="M246.5,240.5H272.5M257.5,241V254M258,245.5H271M258,248.5H271M258,251.5H271M248,243.5H253M248,246.5H253M248,249.5H253M253.5,241V254" stroke="#000" stroke-width="1"/>
<path d="M262,243h2M266,243h2" stroke="#000" stroke-width="1.5"/>
<path d="M229,259.5L245,263M229,266.5L245,270" stroke="#000" stroke-width="2.2" shape-rendering="auto"/>
<path d="M231,260.8L245,264M231,267.8L245,271" stroke="#00FFFF" stroke-width="1" shape-rendering="auto"/>
<path d="M245.5,272.5V289.5M248.5,275V289M277.5,275.5V289.5" stroke="#000" stroke-width="1"/>
<path d="M254,261.5L276,267M250,266.5L275,272.5M249,272L262,275L268,280L272,284M271,254.5L280,264M262,262l6,1M265,268l7,1" stroke="#000" stroke-width="1" fill="none" shape-rendering="auto"/>
<path d="M268,282L278,273M272,287L282,278M270,284L280,287" stroke="#000" stroke-width="1" fill="none" shape-rendering="auto"/>
<rect x="273" y="277" width="3" height="3" fill="none" stroke="#000" stroke-width="1" transform="rotate(45 274.5 278.5)" shape-rendering="auto"/>
<path d="M248,284.5H276" stroke="#000" stroke-width="1"/>
<polygon points="873.5,219.5 897.5,219.5 897.5,257.5 894.5,257.5 873.5,237.5" fill="#55BDBD" stroke="#000" stroke-width="1"/>
<polygon points="874,237 897,237 897,257 894,257" fill="#48A6A6"/>
<path d="M873.5,237.5L894.5,257.5H897.5V219.5" stroke="#000" stroke-width="1" fill="none"/>
<rect x="877.5" y="223.5" width="6" height="4" fill="#00FFFF" stroke="#000" stroke-width="1"/>
<rect x="888.5" y="242.5" width="6" height="4" fill="#00FFFF" stroke="#000" stroke-width="1"/>
<rect x="901" y="227" width="22" height="10" fill="#ECE9D8"/>
<text x="902" y="236" font-size="10" font-weight="normal" fill="#000" textLength="20" lengthAdjust="spacingAndGlyphs">Б-30</text>
<rect x="889" y="331" width="6" height="26" fill="#5BB0B0"/>
<rect x="896.5" y="331.5" width="21" height="27" fill="#00FFFF" stroke="#000" stroke-width="1"/>
<rect x="898.5" y="333.5" width="17" height="23" fill="#00FFFF" stroke="#000" stroke-width="1"/>
<rect x="900.5" y="343.5" width="13" height="11" fill="#00FFFF" stroke="#000" stroke-width="1"/>
<path d="M896.5,356.5H917.5" stroke="#000" stroke-width="1"/>
<rect x="896.5" y="357.5" width="2" height="21" fill="#00FFFF" stroke="#000" stroke-width="1"/>
<rect x="915.5" y="357.5" width="2" height="21" fill="#00FFFF" stroke="#000" stroke-width="1"/>
<polygon points="899.5,359.5 914.5,359.5 908.5,367.5 905.5,367.5" fill="#00FFFF" stroke="#000" stroke-width="1"/>
<rect x="904.5" y="367.5" width="6" height="3" fill="#00FFFF" stroke="#000" stroke-width="1"/>
<circle cx="907" cy="364" r="1.2" fill="#000"/>
<path d="M839.5,569.5V565Q841,559 844.5,557.5H849.5Q853,559 854.5,565V569.5Z" fill="#00FFFF" stroke="#000" stroke-width="1.5" stroke-dasharray="2 1"/>
<rect x="845.5" y="556.5" width="3" height="2" fill="#00FFFF" stroke="#000" stroke-width="1"/>
<rect x="825.5" y="569.5" width="43" height="23" fill="#00FFFF" stroke="#000" stroke-width="1"/>
<path d="M825.5,587.5H868.5" stroke="#000" stroke-width="1"/>
<rect x="833.5" y="571.5" width="27" height="7" rx="1" fill="#00FFFF" stroke="#000" stroke-width="1"/>
<rect x="833.5" y="581.5" width="27" height="3" rx="1" fill="#00FFFF" stroke="#000" stroke-width="1"/>
<rect x="825.5" y="577.5" width="3" height="8" fill="#00FFFF" stroke="#000" stroke-width="1"/>
<rect x="865.5" y="577.5" width="3" height="8" fill="#00FFFF" stroke="#000" stroke-width="1"/>
<rect x="825.5" y="592.5" width="8" height="7" fill="#00FFFF" stroke="#000" stroke-width="1"/>
<rect x="860.5" y="592.5" width="8" height="7" fill="#00FFFF" stroke="#000" stroke-width="1"/>
<polygon points="834.5,592.5 859.5,592.5 856.5,597.5 837.5,597.5" fill="#00FFFF" stroke="#000" stroke-width="1"/>
<path d="M899.5,569.5V565Q901,559 904.5,557.5H909.5Q913,559 914.5,565V569.5Z" fill="#00FFFF" stroke="#000" stroke-width="1.5" stroke-dasharray="2 1"/>
<rect x="905.5" y="556.5" width="3" height="2" fill="#00FFFF" stroke="#000" stroke-width="1"/>
<rect x="885.5" y="569.5" width="43" height="23" fill="#00FFFF" stroke="#000" stroke-width="1"/>
<path d="M885.5,587.5H928.5" stroke="#000" stroke-width="1"/>
<rect x="893.5" y="571.5" width="27" height="7" rx="1" fill="#00FFFF" stroke="#000" stroke-width="1"/>
<rect x="893.5" y="581.5" width="27" height="3" rx="1" fill="#00FFFF" stroke="#000" stroke-width="1"/>
<rect x="885.5" y="577.5" width="3" height="8" fill="#00FFFF" stroke="#000" stroke-width="1"/>
<rect x="925.5" y="577.5" width="3" height="8" fill="#00FFFF" stroke="#000" stroke-width="1"/>
<rect x="885.5" y="592.5" width="8" height="7" fill="#00FFFF" stroke="#000" stroke-width="1"/>
<rect x="920.5" y="592.5" width="8" height="7" fill="#00FFFF" stroke="#000" stroke-width="1"/>
<polygon points="894.5,592.5 919.5,592.5 916.5,597.5 897.5,597.5" fill="#00FFFF" stroke="#000" stroke-width="1"/>
<path d="M959.5,569.5V565Q961,559 964.5,557.5H969.5Q973,559 974.5,565V569.5Z" fill="#00FFFF" stroke="#000" stroke-width="1.5" stroke-dasharray="2 1"/>
<rect x="965.5" y="556.5" width="3" height="2" fill="#00FFFF" stroke="#000" stroke-width="1"/>
<rect x="945.5" y="569.5" width="43" height="23" fill="#00FFFF" stroke="#000" stroke-width="1"/>
<path d="M945.5,587.5H988.5" stroke="#000" stroke-width="1"/>
<rect x="953.5" y="571.5" width="27" height="7" rx="1" fill="#00FFFF" stroke="#000" stroke-width="1"/>
<rect x="953.5" y="581.5" width="27" height="3" rx="1" fill="#00FFFF" stroke="#000" stroke-width="1"/>
<rect x="945.5" y="577.5" width="3" height="8" fill="#00FFFF" stroke="#000" stroke-width="1"/>
<rect x="985.5" y="577.5" width="3" height="8" fill="#00FFFF" stroke="#000" stroke-width="1"/>
<rect x="945.5" y="592.5" width="8" height="7" fill="#00FFFF" stroke="#000" stroke-width="1"/>
<rect x="980.5" y="592.5" width="8" height="7" fill="#00FFFF" stroke="#000" stroke-width="1"/>
<polygon points="954.5,592.5 979.5,592.5 976.5,597.5 957.5,597.5" fill="#00FFFF" stroke="#000" stroke-width="1"/>
<path d="M164.5,722.5L170.5,718.5H178.5L184.5,722.5Z" fill="#00FFFF" stroke="#000" stroke-width="1"/>
<path d="M180.5,697.5H184.5V708.5Q184.5,719 172.5,719Q163.5,719 163.5,708.5Q163.5,698.5 172.5,698.5Q178,698.5 180.5,701Z" fill="#00FFFF" stroke="#000" stroke-width="1" shape-rendering="auto"/>
<circle cx="172.5" cy="708.5" r="4.5" fill="#00FFFF" stroke="#000" stroke-width="1" shape-rendering="auto"/>
<rect x="160.5" y="706.5" width="17" height="4" fill="#00FFFF" stroke="#000" stroke-width="1"/>
<path d="M1001.5,68.5H1010.5L1014.5,72.5V82.5L1018,88.5H1011L1008,92.5L1005,88.5H994.5L997.5,82.5V72.5Z" fill="#00FFFF"/>
<path d="M994.5,88.5L997.5,82.5V72.5L1001.5,68.5H1010.5M1005,88.5L1008,92.5" stroke="#000" stroke-width="1" fill="none"/>
<path d="M1010.5,68.5L1014.5,72.5V82.5L1018,88.5H1011L1008,92.5M994.5,88.5H1005" stroke="#FFF" stroke-width="1" fill="none"/>
<path d="M179.5,110V142" stroke="#FFFFFF" stroke-width="1" fill="none"/>
<path d="M253.5,196V240" stroke="#FFFFFF" stroke-width="1" fill="none"/>
<path d="M346.5,110V140.5H398.5V157" stroke="#FFFFFF" stroke-width="1" fill="none"/>
<path d="M571.5,110V157" stroke="#FFFFFF" stroke-width="1" fill="none"/>
<path d="M818.5,110V150" stroke="#FFFFFF" stroke-width="1" fill="none"/>
<path d="M413.5,191V221.5M413.5,206.5H448.5V196" stroke="#FFFFFF" stroke-width="1" fill="none"/>
<path d="M459.5,196V234" stroke="#FFFFFF" stroke-width="1" fill="none"/>
<path d="M586.5,191V221.5M586.5,206.5H621.5V196" stroke="#FFFFFF" stroke-width="1" fill="none"/>
<path d="M634.5,196V234" stroke="#FFFFFF" stroke-width="1" fill="none"/>
<path d="M883.5,193V219" stroke="#FFFFFF" stroke-width="1" fill="none"/>
<path d="M404.5,277V343" stroke="#FFFFFF" stroke-width="1" fill="none"/>
<path d="M699.5,277V307.5H631.5V343" stroke="#FFFFFF" stroke-width="1" fill="none"/>
<path d="M895.5,258V270.5H907.5V331" stroke="#FFFFFF" stroke-width="1" fill="none"/>
<path d="M907.5,379V557" stroke="#FFFFFF" stroke-width="1" fill="none"/>
<path d="M847.5,437.5H967.5M847.5,437.5V557M967.5,437.5V557" stroke="#FFFFFF" stroke-width="1" fill="none"/>
<path d="M137.5,228V273.5H152.5V315" stroke="#FFFFFF" stroke-width="1" fill="none"/>
<path d="M214.5,261V299.5H247.5V305" stroke="#FFFFFF" stroke-width="1" fill="none"/>
<path d="M256.5,293V305M267.5,293V305" stroke="#FFFFFF" stroke-width="1" fill="none"/>
<path d="M244.5,380V416.5H178.5V456.5" stroke="#FFFFFF" stroke-width="1" fill="none"/>
<path d="M252.5,380V529.5" stroke="#FFFFFF" stroke-width="1" fill="none"/>
<path d="M260.5,380V437.5H307.5V455.5" stroke="#FFFFFF" stroke-width="1" fill="none"/>
<path d="M269.5,380V404" stroke="#FFFFFF" stroke-width="1" fill="none"/>
<path d="M152.5,480V493.5H143.5V506" stroke="#FFFFFF" stroke-width="1" fill="none"/>
<path d="M143.5,521V577M143.5,529.5H252.5" stroke="#FFFFFF" stroke-width="1" fill="none"/>
<path d="M102.5,544V574" stroke="#FFFFFF" stroke-width="1" fill="none"/>
<path d="M46.5,522V534" stroke="#FFFFFF" stroke-width="1" fill="none"/>
<path d="M69.5,406V415" stroke="#FFFFFF" stroke-width="1" fill="none"/>
<rect x="412.0" y="205.0" width="3" height="3" fill="#FFFFFF"/>
<rect x="585.0" y="205.0" width="3" height="3" fill="#FFFFFF"/>
<rect x="142.0" y="528.0" width="3" height="3" fill="#FFFFFF"/>
<rect x="844.5" y="455.5" width="6" height="4" fill="#00FFFF" stroke="#000" stroke-width="1"/>
<rect x="904.5" y="455.5" width="6" height="4" fill="#00FFFF" stroke="#000" stroke-width="1"/>
<rect x="964.5" y="455.5" width="6" height="4" fill="#00FFFF" stroke="#000" stroke-width="1"/>
<text x="149.9" y="83.6" font-size="12" font-weight="normal" fill="#fff" stroke="#fff" stroke-width="0.35" textLength="22.849999999999994" lengthAdjust="spacingAndGlyphs">601</text>
<text x="316.4" y="83.6" font-size="12" font-weight="normal" fill="#fff" stroke="#fff" stroke-width="0.35" textLength="23.80000000000001" lengthAdjust="spacingAndGlyphs">604</text>
<text x="540.7" y="83.7" font-size="12" font-weight="normal" fill="#fff" stroke="#fff" stroke-width="0.35" textLength="23.5" lengthAdjust="spacingAndGlyphs">607</text>
<text x="789.6" y="84" font-size="12" font-weight="normal" fill="#fff" stroke="#fff" stroke-width="0.35" textLength="23.399999999999977" lengthAdjust="spacingAndGlyphs">610</text>
<text x="191" y="135" font-size="12" font-weight="normal" fill="#fff" stroke="#fff" stroke-width="0.35" textLength="23" lengthAdjust="spacingAndGlyphs">602</text>
<text x="248.6" y="155.5" font-size="12" font-weight="normal" fill="#fff" stroke="#fff" stroke-width="0.35" textLength="23.400000000000006" lengthAdjust="spacingAndGlyphs">603</text>
<text x="20.6" y="166.5" font-size="12" font-weight="normal" fill="#fff" stroke="#fff" stroke-width="0.35" textLength="23.4" lengthAdjust="spacingAndGlyphs">614</text>
<text x="60.6" y="166.5" font-size="12" font-weight="normal" fill="#fff" stroke="#fff" stroke-width="0.35" textLength="23.4" lengthAdjust="spacingAndGlyphs">615</text>
<text x="406.7" y="148.5" font-size="12" font-weight="normal" fill="#fff" stroke="#fff" stroke-width="0.35" textLength="23.5" lengthAdjust="spacingAndGlyphs">605</text>
<text x="444.9" y="156.75" font-size="12" font-weight="normal" fill="#fff" stroke="#fff" stroke-width="0.35" textLength="23.100000000000023" lengthAdjust="spacingAndGlyphs">606</text>
<text x="579.8" y="148.5" font-size="12" font-weight="normal" fill="#fff" stroke="#fff" stroke-width="0.35" textLength="23.40000000000009" lengthAdjust="spacingAndGlyphs">608</text>
<text x="617.9" y="156.7" font-size="12" font-weight="normal" fill="#fff" stroke="#fff" stroke-width="0.35" textLength="23.399999999999977" lengthAdjust="spacingAndGlyphs">609</text>
<text x="833.7" y="155.6" font-size="12" font-weight="normal" fill="#fff" stroke="#fff" stroke-width="0.35" textLength="23.09999999999991" lengthAdjust="spacingAndGlyphs">611</text>
<text x="890.5" y="174.9" font-size="12" font-weight="normal" fill="#fff" stroke="#fff" stroke-width="0.35" textLength="24.100000000000023" lengthAdjust="spacingAndGlyphs">612</text>
<text x="146" y="220.6" font-size="12" font-weight="normal" fill="#fff" stroke="#fff" stroke-width="0.35" textLength="23" lengthAdjust="spacingAndGlyphs">500</text>
<text x="185" y="231.5" font-size="12" font-weight="normal" fill="#fff" stroke="#fff" stroke-width="0.35" textLength="22.900000000000006" lengthAdjust="spacingAndGlyphs">502</text>
<text x="262.9" y="231.8" font-size="12" font-weight="normal" fill="#fff" stroke="#fff" stroke-width="0.35" textLength="23.100000000000023" lengthAdjust="spacingAndGlyphs">501</text>
<text x="475.3" y="239.6" font-size="12" font-weight="normal" fill="#fff" stroke="#fff" stroke-width="0.35" textLength="22.30000000000001" lengthAdjust="spacingAndGlyphs">504</text>
<text x="474.4" y="262.5" font-size="12" font-weight="normal" fill="#fff" stroke="#fff" stroke-width="0.35" textLength="22.5" lengthAdjust="spacingAndGlyphs">503</text>
<text x="651" y="240.2" font-size="12" font-weight="normal" fill="#fff" stroke="#fff" stroke-width="0.35" textLength="23.5" lengthAdjust="spacingAndGlyphs">505</text>
<text x="708.5" y="258.8" font-size="12" font-weight="normal" fill="#fff" stroke="#fff" stroke-width="0.35" textLength="23.200000000000045" lengthAdjust="spacingAndGlyphs">506</text>
<text x="202.2" y="316.8" font-size="12" font-weight="normal" fill="#fff" stroke="#fff" stroke-width="0.35" textLength="22.80000000000001" lengthAdjust="spacingAndGlyphs">403</text>
<text x="17.8" y="338.6" font-size="12" font-weight="normal" fill="#fff" stroke="#fff" stroke-width="0.35" textLength="23.099999999999998" lengthAdjust="spacingAndGlyphs">402</text>
<text x="93" y="367.7" font-size="12" font-weight="normal" fill="#fff" stroke="#fff" stroke-width="0.35" textLength="23" lengthAdjust="spacingAndGlyphs">300</text>
<text x="171" y="367.7" font-size="12" font-weight="normal" fill="#fff" stroke="#fff" stroke-width="0.35" textLength="22.599999999999994" lengthAdjust="spacingAndGlyphs">400</text>
<text x="347" y="358.5" font-size="12" font-weight="normal" fill="#fff" stroke="#fff" stroke-width="0.35" textLength="23" lengthAdjust="spacingAndGlyphs">404</text>
<text x="818" y="355.7" font-size="12" font-weight="normal" fill="#fff" stroke="#fff" stroke-width="0.35" textLength="23" lengthAdjust="spacingAndGlyphs">405</text>
<text x="924.9" y="372" font-size="12" font-weight="normal" fill="#fff" stroke="#fff" stroke-width="0.35" textLength="23.0" lengthAdjust="spacingAndGlyphs">407</text>
<text x="216.6" y="471.4" font-size="12" font-weight="normal" fill="#fff" stroke="#fff" stroke-width="0.35" textLength="22.150000000000006" lengthAdjust="spacingAndGlyphs">502</text>
<text x="347.8" y="472.6" font-size="12" font-weight="normal" fill="#fff" stroke="#fff" stroke-width="0.35" textLength="23.19999999999999" lengthAdjust="spacingAndGlyphs">604</text>
<text x="159.6" y="517.7" font-size="12" font-weight="normal" fill="#fff" stroke="#fff" stroke-width="0.35" textLength="23.400000000000006" lengthAdjust="spacingAndGlyphs">202</text>
<text x="43.8" y="562.7" font-size="12" font-weight="normal" fill="#fff" stroke="#fff" stroke-width="0.35" textLength="23.10000000000001" lengthAdjust="spacingAndGlyphs">201</text>
<text x="70.4" y="591.6" font-size="12" font-weight="normal" fill="#fff" stroke="#fff" stroke-width="0.35" textLength="22.799999999999997" lengthAdjust="spacingAndGlyphs">500</text>
<text x="180.5" y="591.6" font-size="12" font-weight="normal" fill="#fff" stroke="#fff" stroke-width="0.35" textLength="23.5" lengthAdjust="spacingAndGlyphs">601</text>
<text x="371" y="636.8" font-size="12" font-weight="normal" fill="#fff" stroke="#fff" stroke-width="0.35" textLength="21.80000000000001" lengthAdjust="spacingAndGlyphs">100</text>
<text x="346.6" y="661.9" font-size="12" font-weight="normal" fill="#fff" stroke="#fff" stroke-width="0.35" textLength="22.399999999999977" lengthAdjust="spacingAndGlyphs">101</text>
<text x="811" y="632.7" font-size="12" font-weight="normal" fill="#fff" stroke="#fff" stroke-width="0.35" textLength="22.299999999999955" lengthAdjust="spacingAndGlyphs">102</text>
<text x="813" y="659.8" font-size="12" font-weight="normal" fill="#fff" stroke="#fff" stroke-width="0.35" textLength="22" lengthAdjust="spacingAndGlyphs">103</text>
<text x="162.7" y="691" font-size="12" font-weight="normal" fill="#fff" stroke="#fff" stroke-width="0.35" textLength="22.100000000000023" lengthAdjust="spacingAndGlyphs">104</text>
<text x="803.2" y="719.2" font-size="12" font-weight="normal" fill="#fff" stroke="#fff" stroke-width="0.35" textLength="24.09999999999991" lengthAdjust="spacingAndGlyphs">610</text>
<text x="147" y="191.8" font-size="10" font-weight="normal" fill="#C8C8C8" textLength="23" lengthAdjust="spacingAndGlyphs">АС-2</text>
<text x="271" y="191.8" font-size="10" font-weight="normal" fill="#C8C8C8" textLength="23.399999999999977" lengthAdjust="spacingAndGlyphs">АС-2</text>
<text x="362.5" y="191.8" font-size="10" font-weight="normal" fill="#C8C8C8" textLength="24.0" lengthAdjust="spacingAndGlyphs">АС-2</text>
<text x="467.2" y="192" font-size="10" font-weight="normal" fill="#C8C8C8" textLength="23.100000000000023" lengthAdjust="spacingAndGlyphs">АС-2</text>
<text x="534.9" y="191.8" font-size="10" font-weight="normal" fill="#C8C8C8" textLength="23.399999999999977" lengthAdjust="spacingAndGlyphs">АС-2</text>
<text x="639" y="191.8" font-size="10" font-weight="normal" fill="#C8C8C8" textLength="23.399999999999977" lengthAdjust="spacingAndGlyphs">АС-2</text>
<text x="290" y="287" font-size="10" font-weight="normal" fill="#C8C8C8" textLength="23" lengthAdjust="spacingAndGlyphs">АС-1</text>
<text x="155" y="311.6" font-size="10" font-weight="normal" fill="#C8C8C8" textLength="23" lengthAdjust="spacingAndGlyphs">АС-4</text>
<text x="378" y="339.9" font-size="10" font-weight="normal" fill="#C8C8C8" textLength="23" lengthAdjust="spacingAndGlyphs">АС-4</text>
<text x="777.3" y="339.9" font-size="10" font-weight="normal" fill="#C8C8C8" textLength="22.700000000000045" lengthAdjust="spacingAndGlyphs">АС-4</text>
<text x="179" y="400" font-size="10" font-weight="normal" fill="#C8C8C8" textLength="23.30000000000001" lengthAdjust="spacingAndGlyphs">АС-3</text>
<text x="186.9" y="495.6" font-size="10" font-weight="normal" fill="#C8C8C8" textLength="22.900000000000006" lengthAdjust="spacingAndGlyphs">АС-4</text>
<text x="315" y="495.6" font-size="10" font-weight="normal" fill="#C8C8C8" textLength="23" lengthAdjust="spacingAndGlyphs">АС-4</text>
<text x="106.9" y="615.4" font-size="10" font-weight="normal" fill="#C8C8C8" textLength="23.5" lengthAdjust="spacingAndGlyphs">АС-4</text>
<text x="150.9" y="615.4" font-size="10" font-weight="normal" fill="#C8C8C8" textLength="23.400000000000006" lengthAdjust="spacingAndGlyphs">АС-4</text>
<text x="47.8" y="431.5" font-size="11" font-weight="normal" fill="#fff" textLength="38.2" lengthAdjust="spacingAndGlyphs">отходы</text>
<text x="389" y="232" font-size="11" font-weight="normal" fill="#fff" textLength="38.30000000000001" lengthAdjust="spacingAndGlyphs">отходы</text>
<text x="570" y="232" font-size="11" font-weight="normal" fill="#fff" textLength="38" lengthAdjust="spacingAndGlyphs">отходы</text>
<text x="265.6" y="415.6" font-size="11" font-weight="normal" fill="#fff" textLength="38.39999999999998" lengthAdjust="spacingAndGlyphs">отходы</text>
<text x="5" y="500" font-size="11" font-weight="bold" fill="#fff" textLength="100" lengthAdjust="spacingAndGlyphs">Черные бункера</text>
<text x="28.8" y="515.8" font-size="11" font-weight="bold" fill="#000" textLength="39.10000000000001" lengthAdjust="spacingAndGlyphs">Б1-Б12</text>
<text x="853.1" y="424.4" font-size="11" font-weight="bold" fill="#fff" textLength="45.299999999999955" lengthAdjust="spacingAndGlyphs">На I др.</text>
<rect x="19" y="304" width="42" height="13" fill="#ECE9D8"/>
<text x="26" y="315" font-size="11" font-weight="bold" fill="#000" textLength="28" lengthAdjust="spacingAndGlyphs">АС 3</text>
<rect x="80" y="303" width="61" height="17" fill="#ECE9D8"/>
<path d="M80.5,320V303.5H141" stroke="#D8D4C4" stroke-width="1" fill="none"/>
<path d="M80,319.5H140.5V303" stroke="#FFFFFF" stroke-width="1" fill="none"/>
<text x="131" y="316" font-size="12" font-weight="bold" fill="#000" textLength="7" lengthAdjust="spacingAndGlyphs">0</text>
<rect x="924" y="311" width="61" height="17" fill="#ECE9D8"/>
<path d="M924.5,328V311.5H985" stroke="#D8D4C4" stroke-width="1" fill="none"/>
<path d="M924,327.5H984.5V311" stroke="#FFFFFF" stroke-width="1" fill="none"/>
<text x="975" y="324" font-size="12" font-weight="bold" fill="#000" textLength="7" lengthAdjust="spacingAndGlyphs">0</text>
<rect x="104" y="324" width="36" height="13" fill="#00FFFF" stroke="#000" stroke-width="2"/>
<text x="108" y="334" font-size="11" font-weight="bold" fill="#000" textLength="28" lengthAdjust="spacingAndGlyphs">Стоп</text>
<rect x="924" y="336" width="36" height="13" fill="#00FFFF" stroke="#000" stroke-width="2"/>
<text x="928" y="346" font-size="11" font-weight="bold" fill="#000" textLength="28" lengthAdjust="spacingAndGlyphs">Стоп</text>
<rect x="166" y="336" width="27" height="11" fill="#ECE9D8"/>
<text x="167" y="345.5" font-size="10" font-weight="normal" fill="#000" textLength="25" lengthAdjust="spacingAndGlyphs">Б-400</text>
<g shape-rendering="auto"><rect x="8" y="30" width="32" height="7" fill="url(#dith)"/><path d="M8,29.5H18M32,29.5H40" stroke="#000" stroke-width="1.5"/><rect x="17.5" y="5.5" width="15" height="23" fill="#6E7E8E" stroke="#000" stroke-width="1.5"/><polygon points="24.5,12.5 32,6 32,29 25,35" fill="#CC8040" stroke="#000" stroke-width="1.2"/><path d="M25.6,13.5V33.5" stroke="#F4D8A8" stroke-width="1"/><rect x="26.8" y="21" width="2" height="2.6" fill="#305868"/><path d="M69,25L62.5,34" stroke="#000" stroke-width="3" stroke-linecap="round"/><path d="M69,25L62.5,34" stroke="#6E7E8E" stroke-width="1.5"/><polygon points="65.5,21.5 72.5,14.5 88.5,14.5 78.5,24.5 65.5,24.5" fill="#6E7E8E" stroke="#000" stroke-width="1.5"/><polygon points="71,10.5 88,10.5 89.5,12 89.5,14.5 86.5,17.5 71,15" fill="#000"/><path d="M72.5,12.5H86.5L88,14.5" stroke="#10E010" stroke-width="1" fill="none"/><path d="M67,23H78M84,17L77,23" stroke="#000" stroke-width="0.8" fill="none"/><rect x="118.5" y="10.5" width="18" height="5" rx="2" fill="#FFFFFF" stroke="#555" stroke-width="1.2"/><path d="M120.5,13H134.5" stroke="#555" stroke-width="1" stroke-dasharray="1 1"/><path d="M114,27L107,34" stroke="#888" stroke-width="2.5" stroke-linecap="round"/><path d="M114,27L107,34" stroke="#EEE" stroke-width="1"/><polygon points="106.5,24.5 113.5,17.5 127.5,17.5 127.5,19 119.5,27.5 106.5,27.5" fill="#E8E8E8" stroke="#777" stroke-width="1.2"/><path d="M152,22.5H168L170,24L173,26Q178,28 182,24" stroke="#B0B0B0" stroke-width="3" fill="none"/><path d="M150,17.5H166V15.5L169,17H170A6.5,6.5 0 1 1 170,21H166L164,22L162,21L160,22.5L158,21L156,22.5L153,21Q149.5,21 149.5,19Z" fill="#F0F0F0" stroke="#909090" stroke-width="1"/><circle cx="175.5" cy="19" r="2" fill="#C8C8C8" stroke="#888" stroke-width="0.8"/><rect x="200" y="6.5" width="2.5" height="14" fill="#FFFFFF" stroke="#000" stroke-width="1"/><rect x="198" y="20.5" width="6.5" height="14" rx="3" fill="#A05028" stroke="#000" stroke-width="1.2"/><path d="M201.3,23V32" stroke="#000" stroke-width="0.8"/><rect x="212.5" y="10.5" width="3" height="10" fill="#FFFFFF" stroke="#000" stroke-width="1"/><path d="M206.5,6.5H218Q222,7 223,11V13.5H221L218,10.5H212L206.5,10.5Z" fill="#F0F0F0" stroke="#000" stroke-width="1.2"/><path d="M213,8.5H217" stroke="#2020E0" stroke-width="1.5"/><rect x="211" y="20.5" width="6.5" height="14" rx="3" fill="#A05028" stroke="#000" stroke-width="1.2"/><path d="M214.3,23V32" stroke="#000" stroke-width="0.8"/><polygon points="249.5,23.5 268.5,5 280.5,16.5 261.5,34.5" fill="#F8F8F8" stroke="#444" stroke-width="0.9"/><path d="M250.5,24.5L261,14M252,26L262.5,15.5M253,21L260,28M255,23L262,30M257,25L264,32" stroke="#777" stroke-width="0.7"/><path d="M263,22Q266,17 272,18L279,22V29L268,27Z" fill="#E0E0E0" stroke="#444" stroke-width="1"/><circle cx="269" cy="21" r="1.2" fill="#555"/><polygon points="309,7 322.5,33 295.5,33" fill="#ABABAB" stroke="#B8B8B8" stroke-width="1.5" stroke-linejoin="round"/><polygon points="309,15.5 316,29 302,29" fill="#FFFFFF"/><rect x="308" y="19" width="2" height="6" fill="#555"/><rect x="308" y="26" width="2" height="2" fill="#555"/><path d="M341.5,5V33M337,28.5H368M337,14.5H368M337,21.5H368" stroke="#A8A8A8" stroke-width="1"/><path d="M366,26.5L369,28.5L366,30.5M339.5,8L341.5,5L343.5,8" stroke="#888" stroke-width="1" fill="none"/><path d="M341.5,6V33M337,28.5H367" stroke="#999" stroke-width="1.2"/><rect x="344" y="24" width="2" height="4" fill="#B0B0B0"/><rect x="347" y="17" width="2" height="11" fill="#B0B0B0"/><rect x="350" y="13" width="2" height="15" fill="#B0B0B0"/><rect x="353" y="11" width="2" height="17" fill="#B0B0B0"/><rect x="356" y="18" width="2" height="10" fill="#B0B0B0"/><rect x="359" y="20" width="2" height="8" fill="#B0B0B0"/><rect x="362" y="18" width="2" height="10" fill="#B0B0B0"/><path d="M344,30.5H365" stroke="#E0E0E0" stroke-width="2" stroke-dasharray="2 1"/><rect x="383.5" y="9.5" width="28" height="22" fill="#F4F4F4" stroke="#9C9C9C" stroke-width="1"/><rect x="384" y="10" width="27" height="8" fill="#989898"/><rect x="390" y="11" width="14" height="4" fill="#B8B8B8"/><rect x="386" y="11.5" width="2.5" height="3.5" fill="#E8E8E8"/><path d="M385.5,20.5H389M392,20.5H394M395,20.5H400M403,20.5H405M408,20.5H409" stroke="#555" stroke-width="1"/><path d="M385.5,23.5H389M392,23.5H394M395,23.5H400M403,23.5H405M408,23.5H409" stroke="#555" stroke-width="1"/><path d="M385.5,26.5H389M392,26.5H394M395,26.5H400M403,26.5H405M408,26.5H409" stroke="#555" stroke-width="1"/><path d="M385.5,29.5H389M392,29.5H394M395,29.5H400M403,29.5H405M408,29.5H409" stroke="#555" stroke-width="1"/><path d="M390.5,19V31M406.5,19V31" stroke="#D0D0D0" stroke-width="0.8"/></g>
</svg>
</body></html>
